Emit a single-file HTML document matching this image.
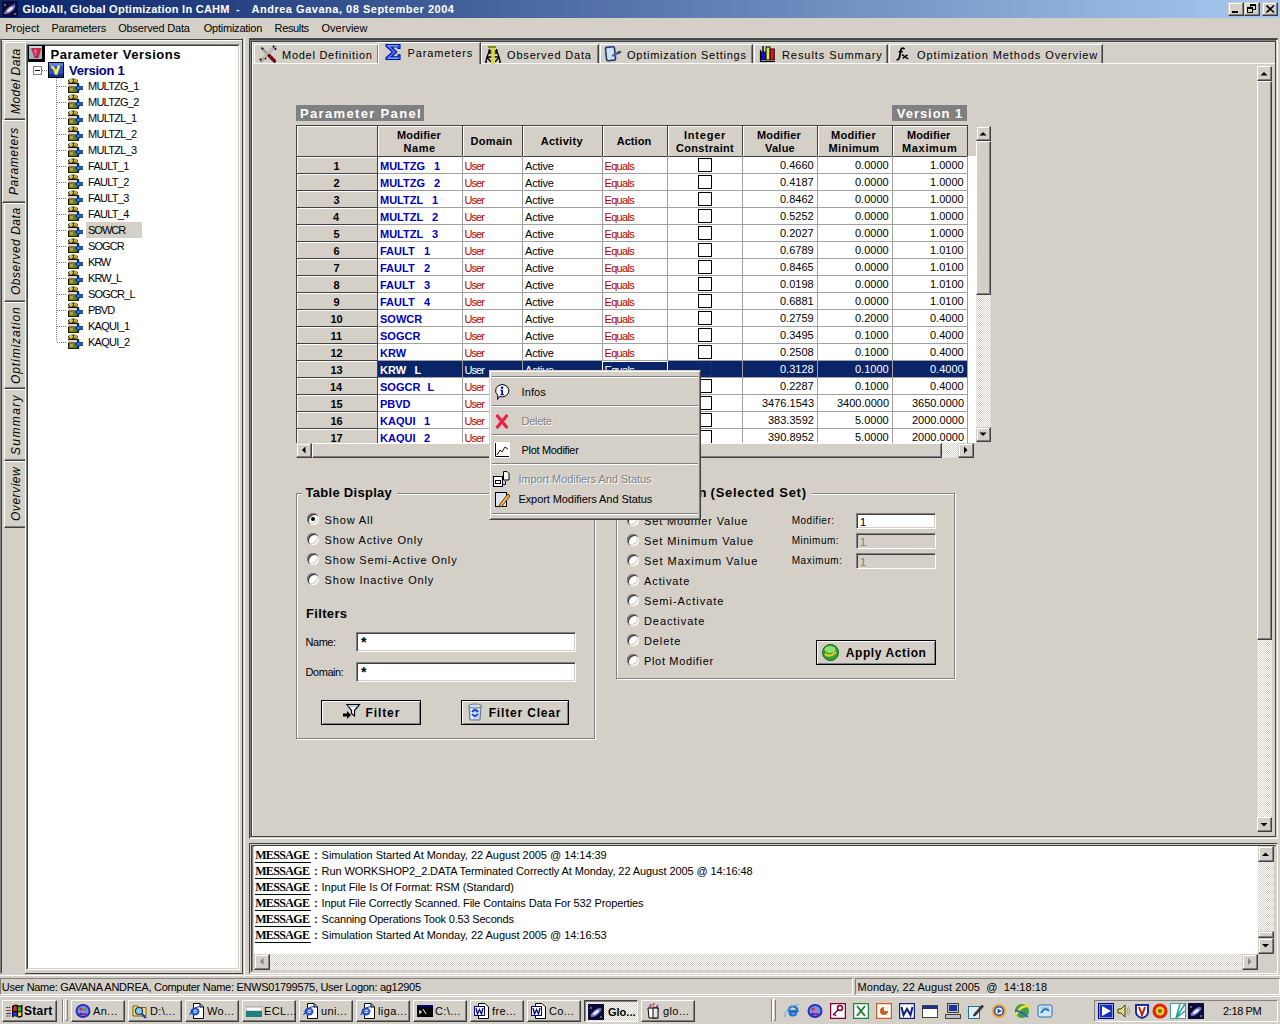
<!DOCTYPE html><html><head><meta charset="utf-8"><title>GlobAll</title><style>
*{margin:0;padding:0;box-sizing:border-box}
html,body{width:1280px;height:1024px;overflow:hidden;background:#d4d0c8;font-family:"Liberation Sans",sans-serif;font-size:11px;color:#000}
.ab{position:absolute}
.t{position:absolute;white-space:nowrap;line-height:1}
.r2{border-style:solid;border-width:1px;border-color:#d4d0c8 #404040 #404040 #d4d0c8;box-shadow:inset -1px -1px 0 #808080, inset 1px 1px 0 #fff;background:#d4d0c8}
.r1{border-style:solid;border-width:1px;border-color:#fff #404040 #404040 #fff;box-shadow:inset -1px -1px 0 #808080;background:#d4d0c8}
.sk{border-style:solid;border-width:1px;border-color:#808080 #fff #fff #808080;box-shadow:inset 1px 1px 0 #404040, inset -1px -1px 0 #d4d0c8}
.chk{background-color:#d4d0c8;background-image:linear-gradient(45deg,#fff 25%,transparent 25%,transparent 75%,#fff 75%),linear-gradient(45deg,#fff 25%,transparent 25%,transparent 75%,#fff 75%);background-size:2px 2px;background-position:0 0,1px 1px}
.rad{position:absolute;width:12px;height:12px;border-radius:50%;background:#fff;box-shadow:inset 1px 1px 0 #808080, inset 2px 2px 0 #404040, inset -1px -1px 0 #fff, inset -2px -2px 0 #d4d0c8}
.rad.on::after{content:"";position:absolute;left:4px;top:4px;width:4px;height:4px;background:#000;border-radius:50%}
</style></head><body>
<div class="ab" style="left:0px;top:0px;width:1280px;height:18px;background:linear-gradient(90deg,#0a246a 0%,#a6caf0 100%)"></div>
<svg class="ab" style="left:2px;top:1px;" width="16" height="16" viewBox="0 0 16 16"><rect width="16" height="16" fill="#0c0c38"/><ellipse cx="8" cy="8.5" rx="6.5" ry="2.6" transform="rotate(-38 8 8.5)" fill="#7a7ad0"/><ellipse cx="8" cy="8.5" rx="3.5" ry="1.4" transform="rotate(-38 8 8.5)" fill="#f0f0ff"/><circle cx="3" cy="4" r=".7" fill="#fff"/><circle cx="13" cy="13" r=".7" fill="#fff"/><circle cx="12.5" cy="3" r=".6" fill="#ccf"/><circle cx="2.5" cy="12" r=".5" fill="#ccf"/></svg>
<div class="t" style="left:22.50px;top:4px;font-size:11px;font-weight:bold;letter-spacing:0.257px;color:#fff;">GlobAll, Global Optimization In CAHM</div>
<div class="t" style="left:236.00px;top:4px;font-size:11px;font-weight:bold;color:#fff;">-</div>
<div class="t" style="left:251.50px;top:4px;font-size:11px;font-weight:bold;letter-spacing:0.516px;color:#fff;">Andrea Gavana, 08 September 2004</div>
<div class="ab r2" style="left:1228px;top:2px;width:16px;height:14px;"><div class="ab" style="left:3px;top:8px;width:6px;height:2px;background:#000"></div></div>
<div class="ab r2" style="left:1244px;top:2px;width:16px;height:14px;"><div class="ab" style="left:5px;top:1px;width:6px;height:6px;border:1px solid #000;border-top-width:2px"></div><div class="ab" style="left:2px;top:4px;width:6px;height:6px;border:1px solid #000;border-top-width:2px;background:#d4d0c8"></div></div>
<div class="ab r2" style="left:1262px;top:2px;width:16px;height:14px;"><svg class="ab" style="left:3px;top:2px" width="9" height="8"><path d="M0.5 0.5L8 7.5M8 0.5L0.5 7.5" stroke="#000" stroke-width="1.6"/></svg></div>
<div class="t" style="left:5.30px;top:23px;font-size:11px;letter-spacing:-0.017px;">Project</div>
<div class="t" style="left:51.40px;top:23px;font-size:11px;letter-spacing:-0.233px;">Parameters</div>
<div class="t" style="left:118.20px;top:23px;font-size:11px;letter-spacing:-0.183px;">Observed Data</div>
<div class="t" style="left:203.70px;top:23px;font-size:11px;letter-spacing:-0.227px;">Optimization</div>
<div class="t" style="left:274.60px;top:23px;font-size:11px;letter-spacing:-0.367px;">Results</div>
<div class="t" style="left:321.50px;top:23px;font-size:11px;letter-spacing:0.014px;">Overview</div>
<div class="ab" style="left:0px;top:38px;width:243px;height:936px;border-style:solid;border-width:1px 1px 0 1px;border-color:#d4d0c8 #404040 #404040 #808080"></div>
<div class="ab" style="left:2px;top:40px;width:240px;height:1px;background:#fff"></div>
<div class="ab" style="left:25px;top:973px;width:218px;height:1px;background:#404040"></div>
<div class="ab" style="left:0px;top:975px;width:1280px;height:1px;background:#fff"></div>
<div class="ab" style="left:1px;top:39px;width:241px;height:934px;border-style:solid;border-width:1px 0 0 1px;border-color:#404040"></div>
<div class="ab" style="left:25px;top:40px;width:2px;height:932px;border-left:1px solid #fff"></div>
<div class="ab" style="left:4px;top:42px;width:21px;height:78px;border-style:solid;border-width:1px 0 1px 1px;border-color:#fff #404040 #404040 #fff;box-shadow:inset 0 -1px 0 #808080;background:#d4d0c8"></div>
<div class="ab" style="left:2px;top:120px;width:23px;height:83px;border-style:solid;border-width:1px 0 1px 1px;border-color:#fff #404040 #404040 #fff;box-shadow:inset 0 -1px 0 #808080;background:#d4d0c8"></div>
<div class="ab" style="left:4px;top:203px;width:21px;height:99px;border-style:solid;border-width:1px 0 1px 1px;border-color:#fff #404040 #404040 #fff;box-shadow:inset 0 -1px 0 #808080;background:#d4d0c8"></div>
<div class="ab" style="left:4px;top:302px;width:21px;height:87px;border-style:solid;border-width:1px 0 1px 1px;border-color:#fff #404040 #404040 #fff;box-shadow:inset 0 -1px 0 #808080;background:#d4d0c8"></div>
<div class="ab" style="left:4px;top:389px;width:21px;height:72px;border-style:solid;border-width:1px 0 1px 1px;border-color:#fff #404040 #404040 #fff;box-shadow:inset 0 -1px 0 #808080;background:#d4d0c8"></div>
<div class="ab" style="left:4px;top:461px;width:21px;height:67px;border-style:solid;border-width:1px 0 1px 1px;border-color:#fff #404040 #404040 #fff;box-shadow:inset 0 -1px 0 #808080;background:#d4d0c8"></div>
<div class="t" style="left:10px;top:114.4px;transform-origin:0 0;transform:rotate(-90deg);font-size:12px;font-style:italic;letter-spacing:0.433px">Model Data</div>
<div class="t" style="left:8px;top:194.9px;transform-origin:0 0;transform:rotate(-90deg);font-size:12px;font-style:italic;letter-spacing:0.589px">Parameters</div>
<div class="t" style="left:10px;top:295px;transform-origin:0 0;transform:rotate(-90deg);font-size:12px;font-style:italic;letter-spacing:0.533px">Observed Data</div>
<div class="t" style="left:10px;top:384px;transform-origin:0 0;transform:rotate(-90deg);font-size:12px;font-style:italic;letter-spacing:0.909px">Optimization</div>
<div class="t" style="left:10px;top:455px;transform-origin:0 0;transform:rotate(-90deg);font-size:12px;font-style:italic;letter-spacing:1.367px">Summary</div>
<div class="t" style="left:10px;top:521.4px;transform-origin:0 0;transform:rotate(-90deg);font-size:12px;font-style:italic;letter-spacing:0.529px">Overview</div>
<div class="ab" style="left:26px;top:44px;width:214px;height:926px;border-style:solid;border-width:1px;border-color:#808080 #fff #fff #808080"></div>
<div class="ab" style="left:27px;top:45px;width:212px;height:924px;background:#fff;border-style:solid;border-width:1px;border-color:#404040 #d4d0c8 #d4d0c8 #404040"></div>
<svg class="ab" style="left:28px;top:45px;" width="17" height="17" viewBox="0 0 17 17"><rect x="0" y="0" width="17" height="17" fill="#000"/><rect x="1" y="1" width="13" height="13" fill="#9ab4c8"/><rect x="1" y="1" width="13" height="2" fill="#c8d4e0"/><path d="M3 3H13.5L10.5 13H6.5Z" fill="#c02848"/><path d="M5.5 4.5H9L8 11.5H7.5Z" fill="#f06088"/></svg>
<div class="t" style="left:50.60px;top:48px;font-size:13px;font-weight:bold;letter-spacing:0.494px;">Parameter Versions</div>
<svg class="ab" style="left:33px;top:66px;" width="9" height="9" viewBox="0 0 9 9"><rect x="0.5" y="0.5" width="8" height="8" fill="#fff" stroke="#808080"/><path d="M2 4.5H7" stroke="#000"/></svg>
<svg class="ab" style="left:42px;top:70px;" width="6" height="1" viewBox="0 0 6 1"><path d="M0 .5H6" stroke="#808080" stroke-dasharray="1 1"/></svg>
<svg class="ab" style="left:48px;top:62px;" width="16" height="16" viewBox="0 0 16 16"><rect width="16" height="16" fill="#000"/><rect x="1" y="1" width="14" height="14" fill="#2850c8"/><rect x="1" y="1" width="14" height="3" fill="#6080e0"/><rect x="1" y="12" width="14" height="3" fill="#183090"/><path d="M3 5Q6.5 4.5 8 12.5" stroke="#f0e840" stroke-width="2.6" fill="none"/><path d="M11 3.5L8 12.5" stroke="#f0f060" stroke-width="2.6" fill="none"/></svg>
<div class="t" style="left:69.00px;top:64px;font-size:13px;font-weight:bold;letter-spacing:-0.250px;color:#000080;">Version 1</div>
<svg class="ab" style="left:56px;top:78px;" width="1" height="264" viewBox="0 0 1 264"><path d="M.5 0V264" stroke="#808080" stroke-dasharray="1 1"/></svg>
<svg class="ab" style="left:57px;top:86px;" width="10" height="1" viewBox="0 0 10 1"><path d="M0 .5H10" stroke="#808080" stroke-dasharray="1 1"/></svg>
<svg class="ab" style="left:67px;top:78px;" width="16" height="16" viewBox="0 0 16 16"><ellipse cx="6" cy="3" rx="5" ry="2.5" fill="#202000"/><circle cx="4" cy="2.8" r="2" fill="#d8c850"/><circle cx="8.5" cy="2.8" r="2" fill="#b8a840"/><rect x="1" y="5" width="11" height="10" fill="#202000"/><rect x="1" y="6" width="9" height="2.5" fill="#e0d0c8"/><rect x="2" y="9" width="8" height="5" fill="#707a20"/><rect x="3" y="10" width="3" height="3" fill="#a0a840"/><path d="M8 10L12 6.5V8.5H15.5V11.5H12V13.5Z" fill="#2070d0" stroke="#002060" stroke-width="0.8"/></svg>
<div class="t" style="left:88.00px;top:81px;font-size:11px;letter-spacing:-0.757px;">MULTZG_1</div>
<svg class="ab" style="left:57px;top:102px;" width="10" height="1" viewBox="0 0 10 1"><path d="M0 .5H10" stroke="#808080" stroke-dasharray="1 1"/></svg>
<svg class="ab" style="left:67px;top:94px;" width="16" height="16" viewBox="0 0 16 16"><ellipse cx="6" cy="3" rx="5" ry="2.5" fill="#202000"/><circle cx="4" cy="2.8" r="2" fill="#d8c850"/><circle cx="8.5" cy="2.8" r="2" fill="#b8a840"/><rect x="1" y="5" width="11" height="10" fill="#202000"/><rect x="1" y="6" width="9" height="2.5" fill="#e0d0c8"/><rect x="2" y="9" width="8" height="5" fill="#707a20"/><rect x="3" y="10" width="3" height="3" fill="#a0a840"/><path d="M8 10L12 6.5V8.5H15.5V11.5H12V13.5Z" fill="#2070d0" stroke="#002060" stroke-width="0.8"/></svg>
<div class="t" style="left:88.00px;top:97px;font-size:11px;letter-spacing:-0.757px;">MULTZG_2</div>
<svg class="ab" style="left:57px;top:118px;" width="10" height="1" viewBox="0 0 10 1"><path d="M0 .5H10" stroke="#808080" stroke-dasharray="1 1"/></svg>
<svg class="ab" style="left:67px;top:110px;" width="16" height="16" viewBox="0 0 16 16"><ellipse cx="6" cy="3" rx="5" ry="2.5" fill="#202000"/><circle cx="4" cy="2.8" r="2" fill="#d8c850"/><circle cx="8.5" cy="2.8" r="2" fill="#b8a840"/><rect x="1" y="5" width="11" height="10" fill="#202000"/><rect x="1" y="6" width="9" height="2.5" fill="#e0d0c8"/><rect x="2" y="9" width="8" height="5" fill="#707a20"/><rect x="3" y="10" width="3" height="3" fill="#a0a840"/><path d="M8 10L12 6.5V8.5H15.5V11.5H12V13.5Z" fill="#2070d0" stroke="#002060" stroke-width="0.8"/></svg>
<div class="t" style="left:88.00px;top:113px;font-size:11px;letter-spacing:-0.717px;">MULTZL_1</div>
<svg class="ab" style="left:57px;top:134px;" width="10" height="1" viewBox="0 0 10 1"><path d="M0 .5H10" stroke="#808080" stroke-dasharray="1 1"/></svg>
<svg class="ab" style="left:67px;top:126px;" width="16" height="16" viewBox="0 0 16 16"><ellipse cx="6" cy="3" rx="5" ry="2.5" fill="#202000"/><circle cx="4" cy="2.8" r="2" fill="#d8c850"/><circle cx="8.5" cy="2.8" r="2" fill="#b8a840"/><rect x="1" y="5" width="11" height="10" fill="#202000"/><rect x="1" y="6" width="9" height="2.5" fill="#e0d0c8"/><rect x="2" y="9" width="8" height="5" fill="#707a20"/><rect x="3" y="10" width="3" height="3" fill="#a0a840"/><path d="M8 10L12 6.5V8.5H15.5V11.5H12V13.5Z" fill="#2070d0" stroke="#002060" stroke-width="0.8"/></svg>
<div class="t" style="left:88.00px;top:129px;font-size:11px;letter-spacing:-0.717px;">MULTZL_2</div>
<svg class="ab" style="left:57px;top:150px;" width="10" height="1" viewBox="0 0 10 1"><path d="M0 .5H10" stroke="#808080" stroke-dasharray="1 1"/></svg>
<svg class="ab" style="left:67px;top:142px;" width="16" height="16" viewBox="0 0 16 16"><ellipse cx="6" cy="3" rx="5" ry="2.5" fill="#202000"/><circle cx="4" cy="2.8" r="2" fill="#d8c850"/><circle cx="8.5" cy="2.8" r="2" fill="#b8a840"/><rect x="1" y="5" width="11" height="10" fill="#202000"/><rect x="1" y="6" width="9" height="2.5" fill="#e0d0c8"/><rect x="2" y="9" width="8" height="5" fill="#707a20"/><rect x="3" y="10" width="3" height="3" fill="#a0a840"/><path d="M8 10L12 6.5V8.5H15.5V11.5H12V13.5Z" fill="#2070d0" stroke="#002060" stroke-width="0.8"/></svg>
<div class="t" style="left:88.00px;top:145px;font-size:11px;letter-spacing:-0.717px;">MULTZL_3</div>
<svg class="ab" style="left:57px;top:166px;" width="10" height="1" viewBox="0 0 10 1"><path d="M0 .5H10" stroke="#808080" stroke-dasharray="1 1"/></svg>
<svg class="ab" style="left:67px;top:158px;" width="16" height="16" viewBox="0 0 16 16"><ellipse cx="6" cy="3" rx="5" ry="2.5" fill="#202000"/><circle cx="4" cy="2.8" r="2" fill="#d8c850"/><circle cx="8.5" cy="2.8" r="2" fill="#b8a840"/><rect x="1" y="5" width="11" height="10" fill="#202000"/><rect x="1" y="6" width="9" height="2.5" fill="#e0d0c8"/><rect x="2" y="9" width="8" height="5" fill="#707a20"/><rect x="3" y="10" width="3" height="3" fill="#a0a840"/><path d="M8 10L12 6.5V8.5H15.5V11.5H12V13.5Z" fill="#2070d0" stroke="#002060" stroke-width="0.8"/></svg>
<div class="t" style="left:88.00px;top:161px;font-size:11px;letter-spacing:-0.713px;">FAULT_1</div>
<svg class="ab" style="left:57px;top:182px;" width="10" height="1" viewBox="0 0 10 1"><path d="M0 .5H10" stroke="#808080" stroke-dasharray="1 1"/></svg>
<svg class="ab" style="left:67px;top:174px;" width="16" height="16" viewBox="0 0 16 16"><ellipse cx="6" cy="3" rx="5" ry="2.5" fill="#202000"/><circle cx="4" cy="2.8" r="2" fill="#d8c850"/><circle cx="8.5" cy="2.8" r="2" fill="#b8a840"/><rect x="1" y="5" width="11" height="10" fill="#202000"/><rect x="1" y="6" width="9" height="2.5" fill="#e0d0c8"/><rect x="2" y="9" width="8" height="5" fill="#707a20"/><rect x="3" y="10" width="3" height="3" fill="#a0a840"/><path d="M8 10L12 6.5V8.5H15.5V11.5H12V13.5Z" fill="#2070d0" stroke="#002060" stroke-width="0.8"/></svg>
<div class="t" style="left:88.00px;top:177px;font-size:11px;letter-spacing:-0.713px;">FAULT_2</div>
<svg class="ab" style="left:57px;top:198px;" width="10" height="1" viewBox="0 0 10 1"><path d="M0 .5H10" stroke="#808080" stroke-dasharray="1 1"/></svg>
<svg class="ab" style="left:67px;top:190px;" width="16" height="16" viewBox="0 0 16 16"><ellipse cx="6" cy="3" rx="5" ry="2.5" fill="#202000"/><circle cx="4" cy="2.8" r="2" fill="#d8c850"/><circle cx="8.5" cy="2.8" r="2" fill="#b8a840"/><rect x="1" y="5" width="11" height="10" fill="#202000"/><rect x="1" y="6" width="9" height="2.5" fill="#e0d0c8"/><rect x="2" y="9" width="8" height="5" fill="#707a20"/><rect x="3" y="10" width="3" height="3" fill="#a0a840"/><path d="M8 10L12 6.5V8.5H15.5V11.5H12V13.5Z" fill="#2070d0" stroke="#002060" stroke-width="0.8"/></svg>
<div class="t" style="left:88.00px;top:193px;font-size:11px;letter-spacing:-0.713px;">FAULT_3</div>
<svg class="ab" style="left:57px;top:214px;" width="10" height="1" viewBox="0 0 10 1"><path d="M0 .5H10" stroke="#808080" stroke-dasharray="1 1"/></svg>
<svg class="ab" style="left:67px;top:206px;" width="16" height="16" viewBox="0 0 16 16"><ellipse cx="6" cy="3" rx="5" ry="2.5" fill="#202000"/><circle cx="4" cy="2.8" r="2" fill="#d8c850"/><circle cx="8.5" cy="2.8" r="2" fill="#b8a840"/><rect x="1" y="5" width="11" height="10" fill="#202000"/><rect x="1" y="6" width="9" height="2.5" fill="#e0d0c8"/><rect x="2" y="9" width="8" height="5" fill="#707a20"/><rect x="3" y="10" width="3" height="3" fill="#a0a840"/><path d="M8 10L12 6.5V8.5H15.5V11.5H12V13.5Z" fill="#2070d0" stroke="#002060" stroke-width="0.8"/></svg>
<div class="t" style="left:88.00px;top:209px;font-size:11px;letter-spacing:-0.713px;">FAULT_4</div>
<svg class="ab" style="left:57px;top:230px;" width="10" height="1" viewBox="0 0 10 1"><path d="M0 .5H10" stroke="#808080" stroke-dasharray="1 1"/></svg>
<svg class="ab" style="left:67px;top:222px;" width="16" height="16" viewBox="0 0 16 16"><ellipse cx="6" cy="3" rx="5" ry="2.5" fill="#202000"/><circle cx="4" cy="2.8" r="2" fill="#d8c850"/><circle cx="8.5" cy="2.8" r="2" fill="#b8a840"/><rect x="1" y="5" width="11" height="10" fill="#202000"/><rect x="1" y="6" width="9" height="2.5" fill="#e0d0c8"/><rect x="2" y="9" width="8" height="5" fill="#707a20"/><rect x="3" y="10" width="3" height="3" fill="#a0a840"/><path d="M8 10L12 6.5V8.5H15.5V11.5H12V13.5Z" fill="#2070d0" stroke="#002060" stroke-width="0.8"/></svg>
<div class="ab" style="left:86px;top:222px;width:56px;height:16px;background:#d4d0c8"></div>
<div class="t" style="left:88.00px;top:225px;font-size:11px;letter-spacing:-0.976px;">SOWCR</div>
<svg class="ab" style="left:57px;top:246px;" width="10" height="1" viewBox="0 0 10 1"><path d="M0 .5H10" stroke="#808080" stroke-dasharray="1 1"/></svg>
<svg class="ab" style="left:67px;top:238px;" width="16" height="16" viewBox="0 0 16 16"><ellipse cx="6" cy="3" rx="5" ry="2.5" fill="#202000"/><circle cx="4" cy="2.8" r="2" fill="#d8c850"/><circle cx="8.5" cy="2.8" r="2" fill="#b8a840"/><rect x="1" y="5" width="11" height="10" fill="#202000"/><rect x="1" y="6" width="9" height="2.5" fill="#e0d0c8"/><rect x="2" y="9" width="8" height="5" fill="#707a20"/><rect x="3" y="10" width="3" height="3" fill="#a0a840"/><path d="M8 10L12 6.5V8.5H15.5V11.5H12V13.5Z" fill="#2070d0" stroke="#002060" stroke-width="0.8"/></svg>
<div class="t" style="left:88.00px;top:241px;font-size:11px;letter-spacing:-0.930px;">SOGCR</div>
<svg class="ab" style="left:57px;top:262px;" width="10" height="1" viewBox="0 0 10 1"><path d="M0 .5H10" stroke="#808080" stroke-dasharray="1 1"/></svg>
<svg class="ab" style="left:67px;top:254px;" width="16" height="16" viewBox="0 0 16 16"><ellipse cx="6" cy="3" rx="5" ry="2.5" fill="#202000"/><circle cx="4" cy="2.8" r="2" fill="#d8c850"/><circle cx="8.5" cy="2.8" r="2" fill="#b8a840"/><rect x="1" y="5" width="11" height="10" fill="#202000"/><rect x="1" y="6" width="9" height="2.5" fill="#e0d0c8"/><rect x="2" y="9" width="8" height="5" fill="#707a20"/><rect x="3" y="10" width="3" height="3" fill="#a0a840"/><path d="M8 10L12 6.5V8.5H15.5V11.5H12V13.5Z" fill="#2070d0" stroke="#002060" stroke-width="0.8"/></svg>
<div class="t" style="left:88.00px;top:257px;font-size:11px;letter-spacing:-1.209px;">KRW</div>
<svg class="ab" style="left:57px;top:278px;" width="10" height="1" viewBox="0 0 10 1"><path d="M0 .5H10" stroke="#808080" stroke-dasharray="1 1"/></svg>
<svg class="ab" style="left:67px;top:270px;" width="16" height="16" viewBox="0 0 16 16"><ellipse cx="6" cy="3" rx="5" ry="2.5" fill="#202000"/><circle cx="4" cy="2.8" r="2" fill="#d8c850"/><circle cx="8.5" cy="2.8" r="2" fill="#b8a840"/><rect x="1" y="5" width="11" height="10" fill="#202000"/><rect x="1" y="6" width="9" height="2.5" fill="#e0d0c8"/><rect x="2" y="9" width="8" height="5" fill="#707a20"/><rect x="3" y="10" width="3" height="3" fill="#a0a840"/><path d="M8 10L12 6.5V8.5H15.5V11.5H12V13.5Z" fill="#2070d0" stroke="#002060" stroke-width="0.8"/></svg>
<div class="t" style="left:88.00px;top:273px;font-size:11px;letter-spacing:-0.883px;">KRW_L</div>
<svg class="ab" style="left:57px;top:294px;" width="10" height="1" viewBox="0 0 10 1"><path d="M0 .5H10" stroke="#808080" stroke-dasharray="1 1"/></svg>
<svg class="ab" style="left:67px;top:286px;" width="16" height="16" viewBox="0 0 16 16"><ellipse cx="6" cy="3" rx="5" ry="2.5" fill="#202000"/><circle cx="4" cy="2.8" r="2" fill="#d8c850"/><circle cx="8.5" cy="2.8" r="2" fill="#b8a840"/><rect x="1" y="5" width="11" height="10" fill="#202000"/><rect x="1" y="6" width="9" height="2.5" fill="#e0d0c8"/><rect x="2" y="9" width="8" height="5" fill="#707a20"/><rect x="3" y="10" width="3" height="3" fill="#a0a840"/><path d="M8 10L12 6.5V8.5H15.5V11.5H12V13.5Z" fill="#2070d0" stroke="#002060" stroke-width="0.8"/></svg>
<div class="t" style="left:88.00px;top:289px;font-size:11px;letter-spacing:-0.822px;">SOGCR_L</div>
<svg class="ab" style="left:57px;top:310px;" width="10" height="1" viewBox="0 0 10 1"><path d="M0 .5H10" stroke="#808080" stroke-dasharray="1 1"/></svg>
<svg class="ab" style="left:67px;top:302px;" width="16" height="16" viewBox="0 0 16 16"><ellipse cx="6" cy="3" rx="5" ry="2.5" fill="#202000"/><circle cx="4" cy="2.8" r="2" fill="#d8c850"/><circle cx="8.5" cy="2.8" r="2" fill="#b8a840"/><rect x="1" y="5" width="11" height="10" fill="#202000"/><rect x="1" y="6" width="9" height="2.5" fill="#e0d0c8"/><rect x="2" y="9" width="8" height="5" fill="#707a20"/><rect x="3" y="10" width="3" height="3" fill="#a0a840"/><path d="M8 10L12 6.5V8.5H15.5V11.5H12V13.5Z" fill="#2070d0" stroke="#002060" stroke-width="0.8"/></svg>
<div class="t" style="left:88.00px;top:305px;font-size:11px;letter-spacing:-0.930px;">PBVD</div>
<svg class="ab" style="left:57px;top:326px;" width="10" height="1" viewBox="0 0 10 1"><path d="M0 .5H10" stroke="#808080" stroke-dasharray="1 1"/></svg>
<svg class="ab" style="left:67px;top:318px;" width="16" height="16" viewBox="0 0 16 16"><ellipse cx="6" cy="3" rx="5" ry="2.5" fill="#202000"/><circle cx="4" cy="2.8" r="2" fill="#d8c850"/><circle cx="8.5" cy="2.8" r="2" fill="#b8a840"/><rect x="1" y="5" width="11" height="10" fill="#202000"/><rect x="1" y="6" width="9" height="2.5" fill="#e0d0c8"/><rect x="2" y="9" width="8" height="5" fill="#707a20"/><rect x="3" y="10" width="3" height="3" fill="#a0a840"/><path d="M8 10L12 6.5V8.5H15.5V11.5H12V13.5Z" fill="#2070d0" stroke="#002060" stroke-width="0.8"/></svg>
<div class="t" style="left:88.00px;top:321px;font-size:11px;letter-spacing:-0.728px;">KAQUI_1</div>
<svg class="ab" style="left:57px;top:342px;" width="10" height="1" viewBox="0 0 10 1"><path d="M0 .5H10" stroke="#808080" stroke-dasharray="1 1"/></svg>
<svg class="ab" style="left:67px;top:334px;" width="16" height="16" viewBox="0 0 16 16"><ellipse cx="6" cy="3" rx="5" ry="2.5" fill="#202000"/><circle cx="4" cy="2.8" r="2" fill="#d8c850"/><circle cx="8.5" cy="2.8" r="2" fill="#b8a840"/><rect x="1" y="5" width="11" height="10" fill="#202000"/><rect x="1" y="6" width="9" height="2.5" fill="#e0d0c8"/><rect x="2" y="9" width="8" height="5" fill="#707a20"/><rect x="3" y="10" width="3" height="3" fill="#a0a840"/><path d="M8 10L12 6.5V8.5H15.5V11.5H12V13.5Z" fill="#2070d0" stroke="#002060" stroke-width="0.8"/></svg>
<div class="t" style="left:88.00px;top:337px;font-size:11px;letter-spacing:-0.728px;">KAQUI_2</div>
<div class="ab" style="left:243px;top:38px;width:6px;height:940px;border-left:1px solid #d4d0c8;box-shadow:inset 1px 0 0 #fff"></div>
<div class="ab" style="left:249px;top:39px;width:1029px;height:800px;border-style:solid;border-width:1px;border-color:#404040 #fff #fff #404040"></div>
<div class="ab" style="left:251px;top:41px;width:1025px;height:796px;border-style:solid;border-width:1px;border-color:#404040 #404040 #404040 #404040;box-shadow:inset 1px 0 0 #fff, inset 0 1px 0 #e4e2de"></div>
<div class="ab" style="left:249px;top:38px;width:1029px;height:1px;background:#505050"></div>
<div class="ab" style="left:250px;top:40px;width:1026px;height:1px;background:#808080"></div>
<div class="ab" style="left:250px;top:40px;width:1px;height:797px;background:#808080"></div>
<div class="ab" style="left:252px;top:63px;width:1023px;height:1px;background:#fff;z-index:1"></div>
<div class="ab" style="left:254px;top:44px;width:125px;height:20px;border-style:solid;border-width:1px 1px 0 1px;border-color:#fff #404040 #fff #fff;box-shadow:inset -1px 0 0 #808080"></div>
<div class="ab" style="left:378px;top:42px;width:103px;height:22px;background:#d4d0c8;border-style:solid;border-width:1px 1px 0 1px;border-color:#fff #404040 #fff #fff;box-shadow:inset -1px 0 0 #808080;z-index:2"></div>
<div class="ab" style="left:481px;top:44px;width:118px;height:20px;border-style:solid;border-width:1px 1px 0 1px;border-color:#fff #404040 #fff #fff;box-shadow:inset -1px 0 0 #808080"></div>
<div class="ab" style="left:600px;top:44px;width:153px;height:20px;border-style:solid;border-width:1px 1px 0 1px;border-color:#fff #404040 #fff #fff;box-shadow:inset -1px 0 0 #808080"></div>
<div class="ab" style="left:754px;top:44px;width:134px;height:20px;border-style:solid;border-width:1px 1px 0 1px;border-color:#fff #404040 #fff #fff;box-shadow:inset -1px 0 0 #808080"></div>
<div class="ab" style="left:889px;top:44px;width:214px;height:20px;border-style:solid;border-width:1px 1px 0 1px;border-color:#fff #404040 #fff #fff;box-shadow:inset -1px 0 0 #808080"></div>
<div class="t" style="left:282.00px;top:50px;font-size:11px;letter-spacing:0.733px;z-index:3;">Model Definition</div>
<div class="t" style="left:407.50px;top:48px;font-size:11px;letter-spacing:0.889px;z-index:3;">Parameters</div>
<div class="t" style="left:507.00px;top:50px;font-size:11px;letter-spacing:0.833px;z-index:3;">Observed Data</div>
<div class="t" style="left:627.00px;top:50px;font-size:11px;letter-spacing:0.750px;z-index:3;">Optimization Settings</div>
<div class="t" style="left:782.00px;top:50px;font-size:11px;letter-spacing:0.929px;z-index:3;">Results Summary</div>
<div class="t" style="left:917.00px;top:50px;font-size:11px;letter-spacing:0.893px;z-index:3;">Optimization Methods Overview</div>
<svg class="ab" style="left:256px;top:43px;z-index:3;" width="24" height="21" viewBox="0 0 24 21"><path d="M5 4.5L11.5 11" stroke="#9a9a9a" stroke-width="2.4"/><circle cx="6.5" cy="5.5" r="1" fill="#000"/><path d="M18.5 4L6 17" stroke="#a8a8a8" stroke-width="2.6"/><path d="M17.5 5L8 15" stroke="#f0f0f0" stroke-width="0.8"/><circle cx="18.5" cy="4.5" r="2" fill="#a0a0a0"/><circle cx="5.5" cy="17.5" r="2" fill="#a0a0a0"/><circle cx="17.5" cy="3.5" r=".9" fill="#000"/><circle cx="19.5" cy="6" r=".9" fill="#000"/><circle cx="4.5" cy="16.5" r=".9" fill="#000"/><circle cx="9.5" cy="15.5" r=".9" fill="#000"/><path d="M13 12.5L18.5 18" stroke="#6a0008" stroke-width="3.4" stroke-linecap="round"/><path d="M13.5 13L18 17.5" stroke="#b03040" stroke-width="0.9"/></svg>
<svg class="ab" style="left:384px;top:44px;z-index:3;" width="17" height="17" viewBox="0 0 17 17"><path d="M2 0.5H16V4.5H14V3H7.5L12.8 8L7.5 12.8H14V10.8H16V15.5H2V13.8L8.5 8L2 2.2Z" fill="#4878f8" stroke="#0010a0" stroke-width="1.1" stroke-linejoin="miter"/><path d="M4 1.8H14M4.5 14.2H14.5" stroke="#90c0ff" stroke-width=".9"/></svg>
<svg class="ab" style="left:484px;top:42px;z-index:3;" width="22" height="22" viewBox="0 0 22 22"><path d="M5.5 7L4.5 11L3 15L1.8 20M12.5 7L13.5 11L15 15L16.2 20M4.5 11H13.5M3.3 15H14.7M3 15.5L7 20M15 15.5L11 20M1 20.2H3M15 20.2H17M5 9H13" stroke="#000" stroke-width="1.3" fill="none"/><rect x="4" y="4" width="8" height="2" fill="#8a8a10"/><rect x="7.3" y="6" width="3.5" height="16" fill="#dcdc38"/></svg>
<svg class="ab" style="left:603px;top:42px;z-index:3;" width="22" height="22" viewBox="0 0 22 22"><rect x="3" y="5" width="9" height="13.5" rx="1.5" fill="#c8e4f8" stroke="#203878" stroke-width="1.6" transform="rotate(-6 7.5 11.5)"/><path d="M5.5 10L7.5 13.5" stroke="#e8e0a0" stroke-width="1.5"/><path d="M10 13.5L16 10.5" stroke="#6060a0" stroke-width="2.4" stroke-linecap="round"/><path d="M15 10.8L17 10" stroke="#404060" stroke-width="2.4" stroke-linecap="round"/></svg>
<svg class="ab" style="left:757px;top:42px;z-index:3;" width="22" height="22" viewBox="0 0 22 22"><path d="M3.5 8V19.5H18" stroke="#000" stroke-width="1.2" fill="none"/><path d="M4 18.5H17" stroke="#fff" stroke-width="1"/><path d="M6 4V10" stroke="#000" stroke-width="1.4"/><rect x="4.5" y="10" width="4" height="8" fill="#1010d0" stroke="#000" stroke-width=".8"/><rect x="9" y="5" width="4" height="13" fill="#d8e840" stroke="#000" stroke-width="1"/><rect x="13.3" y="7" width="4" height="11" fill="#d81818" stroke="#300" stroke-width="1"/></svg>
<svg class="ab" style="left:890px;top:42px;z-index:3;" width="24" height="22" viewBox="0 0 24 22"><path d="M14.5 7.3Q14 6 12.5 6.2Q11 6.5 10.7 8.5L9.8 14Q9.3 16.8 8 17.5L6.5 18" stroke="#000" stroke-width="1.8" fill="none"/><path d="M8.5 9.8H13" stroke="#000" stroke-width="1.3"/><path d="M12.5 13L17.5 16.5M17.5 12.8L12.8 16.3M11.8 13H13.5M16.8 16.5H18.3" stroke="#000" stroke-width="1.5"/></svg>
<div class="ab" style="left:1272px;top:64px;width:3px;height:772px;background:#d4d0c8"></div>
<div class="ab" style="left:1257px;top:66px;width:15px;height:15px;border-style:solid;border-width:1px;border-color:#fff #404040 #404040 #fff;box-shadow:inset -1px -1px 0 #808080"><svg class="ab" style="left:2px;top:4px" width="9" height="6"><path d="M0.5 4.5H7.5L4 1Z" fill="#000"/></svg></div>
<div class="ab r1" style="left:1257px;top:81px;width:15px;height:559px;"></div>
<div class="ab chk" style="left:1257px;top:640px;width:15px;height:177px;"></div>
<div class="ab" style="left:1257px;top:817px;width:15px;height:15px;border-style:solid;border-width:1px;border-color:#fff #404040 #404040 #fff;box-shadow:inset -1px -1px 0 #808080"><svg class="ab" style="left:2px;top:4px" width="9" height="6"><path d="M0.5 1H7.5L4 4.5Z" fill="#000"/></svg></div>
<div class="ab" style="left:296px;top:105px;width:128px;height:16px;background:#808080"></div>
<div class="t" style="left:300.00px;top:107px;font-size:13px;font-weight:bold;letter-spacing:1.336px;color:#fff;">Parameter Panel</div>
<div class="ab" style="left:892px;top:105px;width:75px;height:16px;background:#808080"></div>
<div class="t" style="left:896.80px;top:107px;font-size:13px;font-weight:bold;letter-spacing:0.963px;color:#fff;">Version 1</div>
<div class="ab" style="left:296px;top:156px;width:680px;height:287px;background:#fff"></div>
<div class="ab" style="left:296px;top:125px;width:672px;height:32px;background:#d4d0c8;border-style:solid;border-width:1px 0 0 1px;border-color:#404040"></div>
<div class="ab" style="left:296px;top:125px;width:82px;height:32px;border-style:solid;border-width:1px;border-color:#404040;box-shadow:inset 1px 1px 0 #fff"></div>
<div class="ab" style="left:377px;top:125px;width:86px;height:32px;border-style:solid;border-width:1px;border-color:#404040;box-shadow:inset 1px 1px 0 #fff"></div>
<div class="ab" style="left:462px;top:125px;width:61px;height:32px;border-style:solid;border-width:1px;border-color:#404040;box-shadow:inset 1px 1px 0 #fff"></div>
<div class="ab" style="left:522px;top:125px;width:81px;height:32px;border-style:solid;border-width:1px;border-color:#404040;box-shadow:inset 1px 1px 0 #fff"></div>
<div class="ab" style="left:602px;top:125px;width:66px;height:32px;border-style:solid;border-width:1px;border-color:#404040;box-shadow:inset 1px 1px 0 #fff"></div>
<div class="ab" style="left:667px;top:125px;width:76px;height:32px;border-style:solid;border-width:1px;border-color:#404040;box-shadow:inset 1px 1px 0 #fff"></div>
<div class="ab" style="left:742px;top:125px;width:76px;height:32px;border-style:solid;border-width:1px;border-color:#404040;box-shadow:inset 1px 1px 0 #fff"></div>
<div class="ab" style="left:817px;top:125px;width:76px;height:32px;border-style:solid;border-width:1px;border-color:#404040;box-shadow:inset 1px 1px 0 #fff"></div>
<div class="ab" style="left:892px;top:125px;width:76px;height:32px;border-style:solid;border-width:1px;border-color:#404040;box-shadow:inset 1px 1px 0 #fff"></div>
<div class="t" style="left:397.00px;top:130px;font-size:11px;font-weight:bold;letter-spacing:0.143px;">Modifier</div>
<div class="t" style="left:403.60px;top:143px;font-size:11px;font-weight:bold;letter-spacing:0.533px;">Name</div>
<div class="t" style="left:470.60px;top:136px;font-size:11px;font-weight:bold;letter-spacing:0.280px;">Domain</div>
<div class="t" style="left:540.70px;top:136px;font-size:11px;font-weight:bold;letter-spacing:0.300px;">Activity</div>
<div class="t" style="left:616.70px;top:136px;font-size:11px;font-weight:bold;letter-spacing:0.060px;">Action</div>
<div class="t" style="left:683.90px;top:130px;font-size:11px;font-weight:bold;letter-spacing:0.800px;">Integer</div>
<div class="t" style="left:676.00px;top:143px;font-size:11px;font-weight:bold;letter-spacing:0.300px;">Constraint</div>
<div class="t" style="left:757.00px;top:130px;font-size:11px;font-weight:bold;letter-spacing:0.143px;">Modifier</div>
<div class="t" style="left:765.00px;top:143px;font-size:11px;font-weight:bold;letter-spacing:0.250px;">Value</div>
<div class="t" style="left:831.00px;top:130px;font-size:11px;font-weight:bold;letter-spacing:0.286px;">Modifier</div>
<div class="t" style="left:828.60px;top:143px;font-size:11px;font-weight:bold;letter-spacing:0.367px;">Minimum</div>
<div class="t" style="left:907.00px;top:130px;font-size:11px;font-weight:bold;letter-spacing:0.086px;">Modifier</div>
<div class="t" style="left:902.00px;top:143px;font-size:11px;font-weight:bold;letter-spacing:0.667px;">Maximum</div>
<div class="ab" style="left:0;top:0;width:1280px;height:443px;overflow:hidden">
<div class="ab" style="left:296px;top:156px;width:82px;height:18px;background:#d4d0c8;border:1px solid #404040;box-shadow:inset 1px 1px 0 #fff"></div>
<div class="ab" style="left:462px;top:156px;width:1px;height:17px;background:#a0a0a0"></div>
<div class="ab" style="left:522px;top:156px;width:1px;height:17px;background:#a0a0a0"></div>
<div class="ab" style="left:602px;top:156px;width:1px;height:17px;background:#a0a0a0"></div>
<div class="ab" style="left:667px;top:156px;width:1px;height:17px;background:#a0a0a0"></div>
<div class="ab" style="left:742px;top:156px;width:1px;height:17px;background:#a0a0a0"></div>
<div class="ab" style="left:817px;top:156px;width:1px;height:17px;background:#a0a0a0"></div>
<div class="ab" style="left:892px;top:156px;width:1px;height:17px;background:#a0a0a0"></div>
<div class="ab" style="left:967px;top:156px;width:1px;height:17px;background:#a0a0a0"></div>
<div class="ab" style="left:378px;top:173px;width:589px;height:1px;background:#a0a0a0"></div>
<div class="t" style="left:333.50px;top:161px;font-size:11px;font-weight:bold;">1</div>
<div class="t" style="left:380.00px;top:161px;font-size:11px;font-weight:bold;color:#0000b8;">MULTZG</div>
<div class="t" style="left:434.00px;top:161px;font-size:11px;font-weight:bold;color:#0000b8;">1</div>
<div class="t" style="left:464.40px;top:161px;font-size:11px;letter-spacing:-0.933px;color:#b00000;">User</div>
<div class="t" style="left:525.00px;top:161px;font-size:11px;letter-spacing:-0.200px;color:#000;">Active</div>
<div class="t" style="left:604.50px;top:161px;font-size:11px;letter-spacing:-0.700px;color:#b00000;">Equals</div>
<div class="ab" style="left:698px;top:158px;width:14px;height:14px;border:1px solid #000;background:#fff"></div>
<div class="t" style="left:780.00px;top:160px;font-size:11px;color:#000;">0.4660</div>
<div class="t" style="left:855.00px;top:160px;font-size:11px;color:#000;">0.0000</div>
<div class="t" style="left:930.00px;top:160px;font-size:11px;color:#000;">1.0000</div>
<div class="ab" style="left:296px;top:173px;width:82px;height:18px;background:#d4d0c8;border:1px solid #404040;box-shadow:inset 1px 1px 0 #fff"></div>
<div class="ab" style="left:462px;top:173px;width:1px;height:17px;background:#a0a0a0"></div>
<div class="ab" style="left:522px;top:173px;width:1px;height:17px;background:#a0a0a0"></div>
<div class="ab" style="left:602px;top:173px;width:1px;height:17px;background:#a0a0a0"></div>
<div class="ab" style="left:667px;top:173px;width:1px;height:17px;background:#a0a0a0"></div>
<div class="ab" style="left:742px;top:173px;width:1px;height:17px;background:#a0a0a0"></div>
<div class="ab" style="left:817px;top:173px;width:1px;height:17px;background:#a0a0a0"></div>
<div class="ab" style="left:892px;top:173px;width:1px;height:17px;background:#a0a0a0"></div>
<div class="ab" style="left:967px;top:173px;width:1px;height:17px;background:#a0a0a0"></div>
<div class="ab" style="left:378px;top:190px;width:589px;height:1px;background:#a0a0a0"></div>
<div class="t" style="left:333.50px;top:178px;font-size:11px;font-weight:bold;">2</div>
<div class="t" style="left:380.00px;top:178px;font-size:11px;font-weight:bold;color:#0000b8;">MULTZG</div>
<div class="t" style="left:434.00px;top:178px;font-size:11px;font-weight:bold;color:#0000b8;">2</div>
<div class="t" style="left:464.40px;top:178px;font-size:11px;letter-spacing:-0.933px;color:#b00000;">User</div>
<div class="t" style="left:525.00px;top:178px;font-size:11px;letter-spacing:-0.200px;color:#000;">Active</div>
<div class="t" style="left:604.50px;top:178px;font-size:11px;letter-spacing:-0.700px;color:#b00000;">Equals</div>
<div class="ab" style="left:698px;top:175px;width:14px;height:14px;border:1px solid #000;background:#fff"></div>
<div class="t" style="left:780.00px;top:177px;font-size:11px;color:#000;">0.4187</div>
<div class="t" style="left:855.00px;top:177px;font-size:11px;color:#000;">0.0000</div>
<div class="t" style="left:930.00px;top:177px;font-size:11px;color:#000;">1.0000</div>
<div class="ab" style="left:296px;top:190px;width:82px;height:18px;background:#d4d0c8;border:1px solid #404040;box-shadow:inset 1px 1px 0 #fff"></div>
<div class="ab" style="left:462px;top:190px;width:1px;height:17px;background:#a0a0a0"></div>
<div class="ab" style="left:522px;top:190px;width:1px;height:17px;background:#a0a0a0"></div>
<div class="ab" style="left:602px;top:190px;width:1px;height:17px;background:#a0a0a0"></div>
<div class="ab" style="left:667px;top:190px;width:1px;height:17px;background:#a0a0a0"></div>
<div class="ab" style="left:742px;top:190px;width:1px;height:17px;background:#a0a0a0"></div>
<div class="ab" style="left:817px;top:190px;width:1px;height:17px;background:#a0a0a0"></div>
<div class="ab" style="left:892px;top:190px;width:1px;height:17px;background:#a0a0a0"></div>
<div class="ab" style="left:967px;top:190px;width:1px;height:17px;background:#a0a0a0"></div>
<div class="ab" style="left:378px;top:207px;width:589px;height:1px;background:#a0a0a0"></div>
<div class="t" style="left:333.50px;top:195px;font-size:11px;font-weight:bold;">3</div>
<div class="t" style="left:380.00px;top:195px;font-size:11px;font-weight:bold;color:#0000b8;">MULTZL</div>
<div class="t" style="left:432.00px;top:195px;font-size:11px;font-weight:bold;color:#0000b8;">1</div>
<div class="t" style="left:464.40px;top:195px;font-size:11px;letter-spacing:-0.933px;color:#b00000;">User</div>
<div class="t" style="left:525.00px;top:195px;font-size:11px;letter-spacing:-0.200px;color:#000;">Active</div>
<div class="t" style="left:604.50px;top:195px;font-size:11px;letter-spacing:-0.700px;color:#b00000;">Equals</div>
<div class="ab" style="left:698px;top:192px;width:14px;height:14px;border:1px solid #000;background:#fff"></div>
<div class="t" style="left:780.00px;top:194px;font-size:11px;color:#000;">0.8462</div>
<div class="t" style="left:855.00px;top:194px;font-size:11px;color:#000;">0.0000</div>
<div class="t" style="left:930.00px;top:194px;font-size:11px;color:#000;">1.0000</div>
<div class="ab" style="left:296px;top:207px;width:82px;height:18px;background:#d4d0c8;border:1px solid #404040;box-shadow:inset 1px 1px 0 #fff"></div>
<div class="ab" style="left:462px;top:207px;width:1px;height:17px;background:#a0a0a0"></div>
<div class="ab" style="left:522px;top:207px;width:1px;height:17px;background:#a0a0a0"></div>
<div class="ab" style="left:602px;top:207px;width:1px;height:17px;background:#a0a0a0"></div>
<div class="ab" style="left:667px;top:207px;width:1px;height:17px;background:#a0a0a0"></div>
<div class="ab" style="left:742px;top:207px;width:1px;height:17px;background:#a0a0a0"></div>
<div class="ab" style="left:817px;top:207px;width:1px;height:17px;background:#a0a0a0"></div>
<div class="ab" style="left:892px;top:207px;width:1px;height:17px;background:#a0a0a0"></div>
<div class="ab" style="left:967px;top:207px;width:1px;height:17px;background:#a0a0a0"></div>
<div class="ab" style="left:378px;top:224px;width:589px;height:1px;background:#a0a0a0"></div>
<div class="t" style="left:333.00px;top:212px;font-size:11px;font-weight:bold;">4</div>
<div class="t" style="left:380.00px;top:212px;font-size:11px;font-weight:bold;color:#0000b8;">MULTZL</div>
<div class="t" style="left:432.00px;top:212px;font-size:11px;font-weight:bold;color:#0000b8;">2</div>
<div class="t" style="left:464.40px;top:212px;font-size:11px;letter-spacing:-0.933px;color:#b00000;">User</div>
<div class="t" style="left:525.00px;top:212px;font-size:11px;letter-spacing:-0.200px;color:#000;">Active</div>
<div class="t" style="left:604.50px;top:212px;font-size:11px;letter-spacing:-0.700px;color:#b00000;">Equals</div>
<div class="ab" style="left:698px;top:209px;width:14px;height:14px;border:1px solid #000;background:#fff"></div>
<div class="t" style="left:780.00px;top:211px;font-size:11px;color:#000;">0.5252</div>
<div class="t" style="left:855.00px;top:211px;font-size:11px;color:#000;">0.0000</div>
<div class="t" style="left:930.00px;top:211px;font-size:11px;color:#000;">1.0000</div>
<div class="ab" style="left:296px;top:224px;width:82px;height:18px;background:#d4d0c8;border:1px solid #404040;box-shadow:inset 1px 1px 0 #fff"></div>
<div class="ab" style="left:462px;top:224px;width:1px;height:17px;background:#a0a0a0"></div>
<div class="ab" style="left:522px;top:224px;width:1px;height:17px;background:#a0a0a0"></div>
<div class="ab" style="left:602px;top:224px;width:1px;height:17px;background:#a0a0a0"></div>
<div class="ab" style="left:667px;top:224px;width:1px;height:17px;background:#a0a0a0"></div>
<div class="ab" style="left:742px;top:224px;width:1px;height:17px;background:#a0a0a0"></div>
<div class="ab" style="left:817px;top:224px;width:1px;height:17px;background:#a0a0a0"></div>
<div class="ab" style="left:892px;top:224px;width:1px;height:17px;background:#a0a0a0"></div>
<div class="ab" style="left:967px;top:224px;width:1px;height:17px;background:#a0a0a0"></div>
<div class="ab" style="left:378px;top:241px;width:589px;height:1px;background:#a0a0a0"></div>
<div class="t" style="left:333.50px;top:229px;font-size:11px;font-weight:bold;">5</div>
<div class="t" style="left:380.00px;top:229px;font-size:11px;font-weight:bold;color:#0000b8;">MULTZL</div>
<div class="t" style="left:432.00px;top:229px;font-size:11px;font-weight:bold;color:#0000b8;">3</div>
<div class="t" style="left:464.40px;top:229px;font-size:11px;letter-spacing:-0.933px;color:#b00000;">User</div>
<div class="t" style="left:525.00px;top:229px;font-size:11px;letter-spacing:-0.200px;color:#000;">Active</div>
<div class="t" style="left:604.50px;top:229px;font-size:11px;letter-spacing:-0.700px;color:#b00000;">Equals</div>
<div class="ab" style="left:698px;top:226px;width:14px;height:14px;border:1px solid #000;background:#fff"></div>
<div class="t" style="left:780.00px;top:228px;font-size:11px;color:#000;">0.2027</div>
<div class="t" style="left:855.00px;top:228px;font-size:11px;color:#000;">0.0000</div>
<div class="t" style="left:930.00px;top:228px;font-size:11px;color:#000;">1.0000</div>
<div class="ab" style="left:296px;top:241px;width:82px;height:18px;background:#d4d0c8;border:1px solid #404040;box-shadow:inset 1px 1px 0 #fff"></div>
<div class="ab" style="left:462px;top:241px;width:1px;height:17px;background:#a0a0a0"></div>
<div class="ab" style="left:522px;top:241px;width:1px;height:17px;background:#a0a0a0"></div>
<div class="ab" style="left:602px;top:241px;width:1px;height:17px;background:#a0a0a0"></div>
<div class="ab" style="left:667px;top:241px;width:1px;height:17px;background:#a0a0a0"></div>
<div class="ab" style="left:742px;top:241px;width:1px;height:17px;background:#a0a0a0"></div>
<div class="ab" style="left:817px;top:241px;width:1px;height:17px;background:#a0a0a0"></div>
<div class="ab" style="left:892px;top:241px;width:1px;height:17px;background:#a0a0a0"></div>
<div class="ab" style="left:967px;top:241px;width:1px;height:17px;background:#a0a0a0"></div>
<div class="ab" style="left:378px;top:258px;width:589px;height:1px;background:#a0a0a0"></div>
<div class="t" style="left:333.50px;top:246px;font-size:11px;font-weight:bold;">6</div>
<div class="t" style="left:380.00px;top:246px;font-size:11px;font-weight:bold;color:#0000b8;">FAULT</div>
<div class="t" style="left:424.00px;top:246px;font-size:11px;font-weight:bold;color:#0000b8;">1</div>
<div class="t" style="left:464.40px;top:246px;font-size:11px;letter-spacing:-0.933px;color:#b00000;">User</div>
<div class="t" style="left:525.00px;top:246px;font-size:11px;letter-spacing:-0.200px;color:#000;">Active</div>
<div class="t" style="left:604.50px;top:246px;font-size:11px;letter-spacing:-0.700px;color:#b00000;">Equals</div>
<div class="ab" style="left:698px;top:243px;width:14px;height:14px;border:1px solid #000;background:#fff"></div>
<div class="t" style="left:780.00px;top:245px;font-size:11px;color:#000;">0.6789</div>
<div class="t" style="left:855.00px;top:245px;font-size:11px;color:#000;">0.0000</div>
<div class="t" style="left:930.00px;top:245px;font-size:11px;color:#000;">1.0100</div>
<div class="ab" style="left:296px;top:258px;width:82px;height:18px;background:#d4d0c8;border:1px solid #404040;box-shadow:inset 1px 1px 0 #fff"></div>
<div class="ab" style="left:462px;top:258px;width:1px;height:17px;background:#a0a0a0"></div>
<div class="ab" style="left:522px;top:258px;width:1px;height:17px;background:#a0a0a0"></div>
<div class="ab" style="left:602px;top:258px;width:1px;height:17px;background:#a0a0a0"></div>
<div class="ab" style="left:667px;top:258px;width:1px;height:17px;background:#a0a0a0"></div>
<div class="ab" style="left:742px;top:258px;width:1px;height:17px;background:#a0a0a0"></div>
<div class="ab" style="left:817px;top:258px;width:1px;height:17px;background:#a0a0a0"></div>
<div class="ab" style="left:892px;top:258px;width:1px;height:17px;background:#a0a0a0"></div>
<div class="ab" style="left:967px;top:258px;width:1px;height:17px;background:#a0a0a0"></div>
<div class="ab" style="left:378px;top:275px;width:589px;height:1px;background:#a0a0a0"></div>
<div class="t" style="left:333.50px;top:263px;font-size:11px;font-weight:bold;">7</div>
<div class="t" style="left:380.00px;top:263px;font-size:11px;font-weight:bold;color:#0000b8;">FAULT</div>
<div class="t" style="left:424.00px;top:263px;font-size:11px;font-weight:bold;color:#0000b8;">2</div>
<div class="t" style="left:464.40px;top:263px;font-size:11px;letter-spacing:-0.933px;color:#b00000;">User</div>
<div class="t" style="left:525.00px;top:263px;font-size:11px;letter-spacing:-0.200px;color:#000;">Active</div>
<div class="t" style="left:604.50px;top:263px;font-size:11px;letter-spacing:-0.700px;color:#b00000;">Equals</div>
<div class="ab" style="left:698px;top:260px;width:14px;height:14px;border:1px solid #000;background:#fff"></div>
<div class="t" style="left:780.00px;top:262px;font-size:11px;color:#000;">0.8465</div>
<div class="t" style="left:855.00px;top:262px;font-size:11px;color:#000;">0.0000</div>
<div class="t" style="left:930.00px;top:262px;font-size:11px;color:#000;">1.0100</div>
<div class="ab" style="left:296px;top:275px;width:82px;height:18px;background:#d4d0c8;border:1px solid #404040;box-shadow:inset 1px 1px 0 #fff"></div>
<div class="ab" style="left:462px;top:275px;width:1px;height:17px;background:#a0a0a0"></div>
<div class="ab" style="left:522px;top:275px;width:1px;height:17px;background:#a0a0a0"></div>
<div class="ab" style="left:602px;top:275px;width:1px;height:17px;background:#a0a0a0"></div>
<div class="ab" style="left:667px;top:275px;width:1px;height:17px;background:#a0a0a0"></div>
<div class="ab" style="left:742px;top:275px;width:1px;height:17px;background:#a0a0a0"></div>
<div class="ab" style="left:817px;top:275px;width:1px;height:17px;background:#a0a0a0"></div>
<div class="ab" style="left:892px;top:275px;width:1px;height:17px;background:#a0a0a0"></div>
<div class="ab" style="left:967px;top:275px;width:1px;height:17px;background:#a0a0a0"></div>
<div class="ab" style="left:378px;top:292px;width:589px;height:1px;background:#a0a0a0"></div>
<div class="t" style="left:333.50px;top:280px;font-size:11px;font-weight:bold;">8</div>
<div class="t" style="left:380.00px;top:280px;font-size:11px;font-weight:bold;color:#0000b8;">FAULT</div>
<div class="t" style="left:424.00px;top:280px;font-size:11px;font-weight:bold;color:#0000b8;">3</div>
<div class="t" style="left:464.40px;top:280px;font-size:11px;letter-spacing:-0.933px;color:#b00000;">User</div>
<div class="t" style="left:525.00px;top:280px;font-size:11px;letter-spacing:-0.200px;color:#000;">Active</div>
<div class="t" style="left:604.50px;top:280px;font-size:11px;letter-spacing:-0.700px;color:#b00000;">Equals</div>
<div class="ab" style="left:698px;top:277px;width:14px;height:14px;border:1px solid #000;background:#fff"></div>
<div class="t" style="left:780.00px;top:279px;font-size:11px;color:#000;">0.0198</div>
<div class="t" style="left:855.00px;top:279px;font-size:11px;color:#000;">0.0000</div>
<div class="t" style="left:930.00px;top:279px;font-size:11px;color:#000;">1.0100</div>
<div class="ab" style="left:296px;top:292px;width:82px;height:18px;background:#d4d0c8;border:1px solid #404040;box-shadow:inset 1px 1px 0 #fff"></div>
<div class="ab" style="left:462px;top:292px;width:1px;height:17px;background:#a0a0a0"></div>
<div class="ab" style="left:522px;top:292px;width:1px;height:17px;background:#a0a0a0"></div>
<div class="ab" style="left:602px;top:292px;width:1px;height:17px;background:#a0a0a0"></div>
<div class="ab" style="left:667px;top:292px;width:1px;height:17px;background:#a0a0a0"></div>
<div class="ab" style="left:742px;top:292px;width:1px;height:17px;background:#a0a0a0"></div>
<div class="ab" style="left:817px;top:292px;width:1px;height:17px;background:#a0a0a0"></div>
<div class="ab" style="left:892px;top:292px;width:1px;height:17px;background:#a0a0a0"></div>
<div class="ab" style="left:967px;top:292px;width:1px;height:17px;background:#a0a0a0"></div>
<div class="ab" style="left:378px;top:309px;width:589px;height:1px;background:#a0a0a0"></div>
<div class="t" style="left:333.50px;top:297px;font-size:11px;font-weight:bold;">9</div>
<div class="t" style="left:380.00px;top:297px;font-size:11px;font-weight:bold;color:#0000b8;">FAULT</div>
<div class="t" style="left:424.00px;top:297px;font-size:11px;font-weight:bold;color:#0000b8;">4</div>
<div class="t" style="left:464.40px;top:297px;font-size:11px;letter-spacing:-0.933px;color:#b00000;">User</div>
<div class="t" style="left:525.00px;top:297px;font-size:11px;letter-spacing:-0.200px;color:#000;">Active</div>
<div class="t" style="left:604.50px;top:297px;font-size:11px;letter-spacing:-0.700px;color:#b00000;">Equals</div>
<div class="ab" style="left:698px;top:294px;width:14px;height:14px;border:1px solid #000;background:#fff"></div>
<div class="t" style="left:780.00px;top:296px;font-size:11px;color:#000;">0.6881</div>
<div class="t" style="left:855.00px;top:296px;font-size:11px;color:#000;">0.0000</div>
<div class="t" style="left:930.00px;top:296px;font-size:11px;color:#000;">1.0100</div>
<div class="ab" style="left:296px;top:309px;width:82px;height:18px;background:#d4d0c8;border:1px solid #404040;box-shadow:inset 1px 1px 0 #fff"></div>
<div class="ab" style="left:462px;top:309px;width:1px;height:17px;background:#a0a0a0"></div>
<div class="ab" style="left:522px;top:309px;width:1px;height:17px;background:#a0a0a0"></div>
<div class="ab" style="left:602px;top:309px;width:1px;height:17px;background:#a0a0a0"></div>
<div class="ab" style="left:667px;top:309px;width:1px;height:17px;background:#a0a0a0"></div>
<div class="ab" style="left:742px;top:309px;width:1px;height:17px;background:#a0a0a0"></div>
<div class="ab" style="left:817px;top:309px;width:1px;height:17px;background:#a0a0a0"></div>
<div class="ab" style="left:892px;top:309px;width:1px;height:17px;background:#a0a0a0"></div>
<div class="ab" style="left:967px;top:309px;width:1px;height:17px;background:#a0a0a0"></div>
<div class="ab" style="left:378px;top:326px;width:589px;height:1px;background:#a0a0a0"></div>
<div class="t" style="left:330.50px;top:314px;font-size:11px;font-weight:bold;">10</div>
<div class="t" style="left:380.00px;top:314px;font-size:11px;font-weight:bold;color:#0000b8;">SOWCR</div>
<div class="t" style="left:464.40px;top:314px;font-size:11px;letter-spacing:-0.933px;color:#b00000;">User</div>
<div class="t" style="left:525.00px;top:314px;font-size:11px;letter-spacing:-0.200px;color:#000;">Active</div>
<div class="t" style="left:604.50px;top:314px;font-size:11px;letter-spacing:-0.700px;color:#b00000;">Equals</div>
<div class="ab" style="left:698px;top:311px;width:14px;height:14px;border:1px solid #000;background:#fff"></div>
<div class="t" style="left:780.00px;top:313px;font-size:11px;color:#000;">0.2759</div>
<div class="t" style="left:855.00px;top:313px;font-size:11px;color:#000;">0.2000</div>
<div class="t" style="left:930.00px;top:313px;font-size:11px;color:#000;">0.4000</div>
<div class="ab" style="left:296px;top:326px;width:82px;height:18px;background:#d4d0c8;border:1px solid #404040;box-shadow:inset 1px 1px 0 #fff"></div>
<div class="ab" style="left:462px;top:326px;width:1px;height:17px;background:#a0a0a0"></div>
<div class="ab" style="left:522px;top:326px;width:1px;height:17px;background:#a0a0a0"></div>
<div class="ab" style="left:602px;top:326px;width:1px;height:17px;background:#a0a0a0"></div>
<div class="ab" style="left:667px;top:326px;width:1px;height:17px;background:#a0a0a0"></div>
<div class="ab" style="left:742px;top:326px;width:1px;height:17px;background:#a0a0a0"></div>
<div class="ab" style="left:817px;top:326px;width:1px;height:17px;background:#a0a0a0"></div>
<div class="ab" style="left:892px;top:326px;width:1px;height:17px;background:#a0a0a0"></div>
<div class="ab" style="left:967px;top:326px;width:1px;height:17px;background:#a0a0a0"></div>
<div class="ab" style="left:378px;top:343px;width:589px;height:1px;background:#a0a0a0"></div>
<div class="t" style="left:330.50px;top:331px;font-size:11px;font-weight:bold;">11</div>
<div class="t" style="left:380.00px;top:331px;font-size:11px;font-weight:bold;color:#0000b8;">SOGCR</div>
<div class="t" style="left:464.40px;top:331px;font-size:11px;letter-spacing:-0.933px;color:#b00000;">User</div>
<div class="t" style="left:525.00px;top:331px;font-size:11px;letter-spacing:-0.200px;color:#000;">Active</div>
<div class="t" style="left:604.50px;top:331px;font-size:11px;letter-spacing:-0.700px;color:#b00000;">Equals</div>
<div class="ab" style="left:698px;top:328px;width:14px;height:14px;border:1px solid #000;background:#fff"></div>
<div class="t" style="left:780.00px;top:330px;font-size:11px;color:#000;">0.3495</div>
<div class="t" style="left:855.00px;top:330px;font-size:11px;color:#000;">0.1000</div>
<div class="t" style="left:930.00px;top:330px;font-size:11px;color:#000;">0.4000</div>
<div class="ab" style="left:296px;top:343px;width:82px;height:18px;background:#d4d0c8;border:1px solid #404040;box-shadow:inset 1px 1px 0 #fff"></div>
<div class="ab" style="left:462px;top:343px;width:1px;height:17px;background:#a0a0a0"></div>
<div class="ab" style="left:522px;top:343px;width:1px;height:17px;background:#a0a0a0"></div>
<div class="ab" style="left:602px;top:343px;width:1px;height:17px;background:#a0a0a0"></div>
<div class="ab" style="left:667px;top:343px;width:1px;height:17px;background:#a0a0a0"></div>
<div class="ab" style="left:742px;top:343px;width:1px;height:17px;background:#a0a0a0"></div>
<div class="ab" style="left:817px;top:343px;width:1px;height:17px;background:#a0a0a0"></div>
<div class="ab" style="left:892px;top:343px;width:1px;height:17px;background:#a0a0a0"></div>
<div class="ab" style="left:967px;top:343px;width:1px;height:17px;background:#a0a0a0"></div>
<div class="ab" style="left:378px;top:360px;width:589px;height:1px;background:#a0a0a0"></div>
<div class="t" style="left:330.50px;top:348px;font-size:11px;font-weight:bold;">12</div>
<div class="t" style="left:380.00px;top:348px;font-size:11px;font-weight:bold;color:#0000b8;">KRW</div>
<div class="t" style="left:464.40px;top:348px;font-size:11px;letter-spacing:-0.933px;color:#b00000;">User</div>
<div class="t" style="left:525.00px;top:348px;font-size:11px;letter-spacing:-0.200px;color:#000;">Active</div>
<div class="t" style="left:604.50px;top:348px;font-size:11px;letter-spacing:-0.700px;color:#b00000;">Equals</div>
<div class="ab" style="left:698px;top:345px;width:14px;height:14px;border:1px solid #000;background:#fff"></div>
<div class="t" style="left:780.00px;top:347px;font-size:11px;color:#000;">0.2508</div>
<div class="t" style="left:855.00px;top:347px;font-size:11px;color:#000;">0.1000</div>
<div class="t" style="left:930.00px;top:347px;font-size:11px;color:#000;">0.4000</div>
<div class="ab" style="left:296px;top:360px;width:82px;height:18px;background:#d4d0c8;border:1px solid #404040;box-shadow:inset 1px 1px 0 #fff"></div>
<div class="ab" style="left:378px;top:361px;width:589px;height:16px;background:#0a246a"></div>
<div class="ab" style="left:462px;top:360px;width:1px;height:17px;background:#a0a0a0"></div>
<div class="ab" style="left:522px;top:360px;width:1px;height:17px;background:#a0a0a0"></div>
<div class="ab" style="left:602px;top:360px;width:1px;height:17px;background:#a0a0a0"></div>
<div class="ab" style="left:667px;top:360px;width:1px;height:17px;background:#a0a0a0"></div>
<div class="ab" style="left:742px;top:360px;width:1px;height:17px;background:#a0a0a0"></div>
<div class="ab" style="left:817px;top:360px;width:1px;height:17px;background:#a0a0a0"></div>
<div class="ab" style="left:892px;top:360px;width:1px;height:17px;background:#a0a0a0"></div>
<div class="ab" style="left:967px;top:360px;width:1px;height:17px;background:#a0a0a0"></div>
<div class="ab" style="left:378px;top:377px;width:589px;height:1px;background:#a0a0a0"></div>
<div class="t" style="left:330.50px;top:365px;font-size:11px;font-weight:bold;">13</div>
<div class="t" style="left:380.00px;top:365px;font-size:11px;font-weight:bold;color:#fff;">KRW</div>
<div class="t" style="left:414.50px;top:365px;font-size:11px;font-weight:bold;color:#fff;">L</div>
<div class="t" style="left:464.40px;top:365px;font-size:11px;letter-spacing:-0.933px;color:#fff;">User</div>
<div class="t" style="left:525.00px;top:365px;font-size:11px;letter-spacing:-0.200px;color:#fff;">Active</div>
<div class="t" style="left:604.50px;top:365px;font-size:11px;letter-spacing:-0.700px;color:#fff;">Equals</div>
<div class="ab" style="left:698px;top:362px;width:14px;height:14px;border:1px solid #1a2a70;background:#0a246a"></div>
<div class="t" style="left:780.00px;top:364px;font-size:11px;color:#fff;">0.3128</div>
<div class="t" style="left:855.00px;top:364px;font-size:11px;color:#fff;">0.1000</div>
<div class="t" style="left:930.00px;top:364px;font-size:11px;color:#fff;">0.4000</div>
<div class="ab" style="left:296px;top:377px;width:82px;height:18px;background:#d4d0c8;border:1px solid #404040;box-shadow:inset 1px 1px 0 #fff"></div>
<div class="ab" style="left:462px;top:377px;width:1px;height:17px;background:#a0a0a0"></div>
<div class="ab" style="left:522px;top:377px;width:1px;height:17px;background:#a0a0a0"></div>
<div class="ab" style="left:602px;top:377px;width:1px;height:17px;background:#a0a0a0"></div>
<div class="ab" style="left:667px;top:377px;width:1px;height:17px;background:#a0a0a0"></div>
<div class="ab" style="left:742px;top:377px;width:1px;height:17px;background:#a0a0a0"></div>
<div class="ab" style="left:817px;top:377px;width:1px;height:17px;background:#a0a0a0"></div>
<div class="ab" style="left:892px;top:377px;width:1px;height:17px;background:#a0a0a0"></div>
<div class="ab" style="left:967px;top:377px;width:1px;height:17px;background:#a0a0a0"></div>
<div class="ab" style="left:378px;top:394px;width:589px;height:1px;background:#a0a0a0"></div>
<div class="t" style="left:330.00px;top:382px;font-size:11px;font-weight:bold;">14</div>
<div class="t" style="left:380.00px;top:382px;font-size:11px;font-weight:bold;color:#0000b8;">SOGCR</div>
<div class="t" style="left:427.50px;top:382px;font-size:11px;font-weight:bold;color:#0000b8;">L</div>
<div class="t" style="left:464.40px;top:382px;font-size:11px;letter-spacing:-0.933px;color:#b00000;">User</div>
<div class="t" style="left:525.00px;top:382px;font-size:11px;letter-spacing:-0.200px;color:#000;">Active</div>
<div class="t" style="left:604.50px;top:382px;font-size:11px;letter-spacing:-0.700px;color:#b00000;">Equals</div>
<div class="ab" style="left:698px;top:379px;width:14px;height:14px;border:1px solid #000;background:#fff"></div>
<div class="t" style="left:780.00px;top:381px;font-size:11px;color:#000;">0.2287</div>
<div class="t" style="left:855.00px;top:381px;font-size:11px;color:#000;">0.1000</div>
<div class="t" style="left:930.00px;top:381px;font-size:11px;color:#000;">0.4000</div>
<div class="ab" style="left:296px;top:394px;width:82px;height:18px;background:#d4d0c8;border:1px solid #404040;box-shadow:inset 1px 1px 0 #fff"></div>
<div class="ab" style="left:462px;top:394px;width:1px;height:17px;background:#a0a0a0"></div>
<div class="ab" style="left:522px;top:394px;width:1px;height:17px;background:#a0a0a0"></div>
<div class="ab" style="left:602px;top:394px;width:1px;height:17px;background:#a0a0a0"></div>
<div class="ab" style="left:667px;top:394px;width:1px;height:17px;background:#a0a0a0"></div>
<div class="ab" style="left:742px;top:394px;width:1px;height:17px;background:#a0a0a0"></div>
<div class="ab" style="left:817px;top:394px;width:1px;height:17px;background:#a0a0a0"></div>
<div class="ab" style="left:892px;top:394px;width:1px;height:17px;background:#a0a0a0"></div>
<div class="ab" style="left:967px;top:394px;width:1px;height:17px;background:#a0a0a0"></div>
<div class="ab" style="left:378px;top:411px;width:589px;height:1px;background:#a0a0a0"></div>
<div class="t" style="left:330.50px;top:399px;font-size:11px;font-weight:bold;">15</div>
<div class="t" style="left:380.00px;top:399px;font-size:11px;font-weight:bold;color:#0000b8;">PBVD</div>
<div class="t" style="left:464.40px;top:399px;font-size:11px;letter-spacing:-0.933px;color:#b00000;">User</div>
<div class="t" style="left:525.00px;top:399px;font-size:11px;letter-spacing:-0.200px;color:#000;">Active</div>
<div class="t" style="left:604.50px;top:399px;font-size:11px;letter-spacing:-0.700px;color:#b00000;">Equals</div>
<div class="ab" style="left:698px;top:396px;width:14px;height:14px;border:1px solid #000;background:#fff"></div>
<div class="t" style="left:762.00px;top:398px;font-size:11px;color:#000;">3476.1543</div>
<div class="t" style="left:837.00px;top:398px;font-size:11px;color:#000;">3400.0000</div>
<div class="t" style="left:912.00px;top:398px;font-size:11px;color:#000;">3650.0000</div>
<div class="ab" style="left:296px;top:411px;width:82px;height:18px;background:#d4d0c8;border:1px solid #404040;box-shadow:inset 1px 1px 0 #fff"></div>
<div class="ab" style="left:462px;top:411px;width:1px;height:17px;background:#a0a0a0"></div>
<div class="ab" style="left:522px;top:411px;width:1px;height:17px;background:#a0a0a0"></div>
<div class="ab" style="left:602px;top:411px;width:1px;height:17px;background:#a0a0a0"></div>
<div class="ab" style="left:667px;top:411px;width:1px;height:17px;background:#a0a0a0"></div>
<div class="ab" style="left:742px;top:411px;width:1px;height:17px;background:#a0a0a0"></div>
<div class="ab" style="left:817px;top:411px;width:1px;height:17px;background:#a0a0a0"></div>
<div class="ab" style="left:892px;top:411px;width:1px;height:17px;background:#a0a0a0"></div>
<div class="ab" style="left:967px;top:411px;width:1px;height:17px;background:#a0a0a0"></div>
<div class="ab" style="left:378px;top:428px;width:589px;height:1px;background:#a0a0a0"></div>
<div class="t" style="left:330.50px;top:416px;font-size:11px;font-weight:bold;">16</div>
<div class="t" style="left:380.00px;top:416px;font-size:11px;font-weight:bold;color:#0000b8;">KAQUI</div>
<div class="t" style="left:424.00px;top:416px;font-size:11px;font-weight:bold;color:#0000b8;">1</div>
<div class="t" style="left:464.40px;top:416px;font-size:11px;letter-spacing:-0.933px;color:#b00000;">User</div>
<div class="t" style="left:525.00px;top:416px;font-size:11px;letter-spacing:-0.200px;color:#000;">Active</div>
<div class="t" style="left:604.50px;top:416px;font-size:11px;letter-spacing:-0.700px;color:#b00000;">Equals</div>
<div class="ab" style="left:698px;top:413px;width:14px;height:14px;border:1px solid #000;background:#fff"></div>
<div class="t" style="left:768.00px;top:415px;font-size:11px;color:#000;">383.3592</div>
<div class="t" style="left:855.00px;top:415px;font-size:11px;color:#000;">5.0000</div>
<div class="t" style="left:912.00px;top:415px;font-size:11px;color:#000;">2000.0000</div>
<div class="ab" style="left:296px;top:428px;width:82px;height:18px;background:#d4d0c8;border:1px solid #404040;box-shadow:inset 1px 1px 0 #fff"></div>
<div class="ab" style="left:462px;top:428px;width:1px;height:17px;background:#a0a0a0"></div>
<div class="ab" style="left:522px;top:428px;width:1px;height:17px;background:#a0a0a0"></div>
<div class="ab" style="left:602px;top:428px;width:1px;height:17px;background:#a0a0a0"></div>
<div class="ab" style="left:667px;top:428px;width:1px;height:17px;background:#a0a0a0"></div>
<div class="ab" style="left:742px;top:428px;width:1px;height:17px;background:#a0a0a0"></div>
<div class="ab" style="left:817px;top:428px;width:1px;height:17px;background:#a0a0a0"></div>
<div class="ab" style="left:892px;top:428px;width:1px;height:17px;background:#a0a0a0"></div>
<div class="ab" style="left:967px;top:428px;width:1px;height:17px;background:#a0a0a0"></div>
<div class="ab" style="left:378px;top:445px;width:589px;height:1px;background:#a0a0a0"></div>
<div class="t" style="left:330.50px;top:433px;font-size:11px;font-weight:bold;">17</div>
<div class="t" style="left:380.00px;top:433px;font-size:11px;font-weight:bold;color:#0000b8;">KAQUI</div>
<div class="t" style="left:424.00px;top:433px;font-size:11px;font-weight:bold;color:#0000b8;">2</div>
<div class="t" style="left:464.40px;top:433px;font-size:11px;letter-spacing:-0.933px;color:#b00000;">User</div>
<div class="t" style="left:525.00px;top:433px;font-size:11px;letter-spacing:-0.200px;color:#000;">Active</div>
<div class="t" style="left:604.50px;top:433px;font-size:11px;letter-spacing:-0.700px;color:#b00000;">Equals</div>
<div class="ab" style="left:698px;top:430px;width:14px;height:14px;border:1px solid #000;background:#fff"></div>
<div class="t" style="left:768.00px;top:432px;font-size:11px;color:#000;">390.8952</div>
<div class="t" style="left:855.00px;top:432px;font-size:11px;color:#000;">5.0000</div>
<div class="t" style="left:912.00px;top:432px;font-size:11px;color:#000;">2000.0000</div>
<div class="ab" style="left:602px;top:361px;width:66px;height:16px;border:1px solid #fff"></div>
</div>
<div class="ab r2" style="left:976px;top:126px;width:15px;height:15px;"><svg class="ab" style="left:-1px;top:-1px" width="15" height="15"><path d="M3.5 9.5H10.5L7.0 6.0Z" fill="#000"/></svg></div>
<div class="ab r1" style="left:976px;top:141px;width:15px;height:154px;"></div>
<div class="ab chk" style="left:976px;top:295px;width:15px;height:132px;"></div>
<div class="ab r2" style="left:976px;top:427px;width:15px;height:15px;"><svg class="ab" style="left:-1px;top:-1px" width="15" height="15"><path d="M3.5 5.5H10.5L7.0 9.0Z" fill="#000"/></svg></div>
<div class="ab r2" style="left:296px;top:443px;width:16px;height:15px;"><svg class="ab" style="left:-1px;top:-1px" width="16" height="15"><path d="M9.5 3.5V10.5L6.0 7.0Z" fill="#000"/></svg></div>
<div class="ab r1" style="left:312px;top:443px;width:630px;height:15px;"></div>
<div class="ab chk" style="left:942px;top:443px;width:16px;height:15px;"></div>
<div class="ab r2" style="left:958px;top:443px;width:16px;height:15px;"><svg class="ab" style="left:-1px;top:-1px" width="16" height="15"><path d="M6.0 3.5V10.5L9.5 7.0Z" fill="#000"/></svg></div>
<div class="ab" style="left:296px;top:493px;width:299px;height:246px;border:1px solid #808080;box-shadow:inset 1px 1px 0 #fff, 1px 1px 0 #fff"></div>
<div class="ab" style="left:302px;top:486px;width:95px;height:14px;background:#d4d0c8"></div>
<div class="t" style="left:305.50px;top:486px;font-size:13px;font-weight:bold;letter-spacing:0.292px;">Table Display</div>
<div class="rad on" style="left:307px;top:513px"></div>
<div class="t" style="left:324.50px;top:515px;font-size:11px;letter-spacing:0.857px;">Show All</div>
<div class="rad" style="left:307px;top:533px"></div>
<div class="t" style="left:324.50px;top:535px;font-size:11px;letter-spacing:0.827px;">Show Active Only</div>
<div class="rad" style="left:307px;top:553px"></div>
<div class="t" style="left:324.50px;top:555px;font-size:11px;letter-spacing:0.860px;">Show Semi-Active Only</div>
<div class="rad" style="left:307px;top:573px"></div>
<div class="t" style="left:324.50px;top:575px;font-size:11px;letter-spacing:0.865px;">Show Inactive Only</div>
<div class="t" style="left:306.00px;top:607px;font-size:13px;font-weight:bold;letter-spacing:0.333px;">Filters</div>
<div class="t" style="left:305.60px;top:637px;font-size:11px;letter-spacing:-0.500px;">Name:</div>
<div class="t" style="left:305.60px;top:667px;font-size:11px;letter-spacing:-0.467px;">Domain:</div>
<div class="ab sk" style="left:356px;top:632px;width:220px;height:20px;background:#fff"></div>
<div class="t" style="left:361.00px;top:635px;font-size:14px;font-weight:bold;">*</div>
<div class="ab sk" style="left:356px;top:662px;width:220px;height:20px;background:#fff"></div>
<div class="t" style="left:361.00px;top:665px;font-size:14px;font-weight:bold;">*</div>
<div class="ab" style="left:321px;top:700px;width:100px;height:25px;border:1px solid #000;box-shadow:inset 1px 1px 0 #fff, inset -1px -1px 0 #808080;background:#d4d0c8"></div>
<div class="t" style="left:365.60px;top:707px;font-size:12px;font-weight:bold;letter-spacing:0.880px;">Filter</div>
<svg class="ab" style="left:342px;top:703px;" width="19" height="18" viewBox="0 0 19 18"><path d="M5 1.5H17.5L12.5 7.5V13L9.5 10.5V7.5Z" fill="#fff" stroke="#000" stroke-width="1.2"/><path d="M6 3H16" stroke="#70a0c0"/><path d="M1 10.5H5V8L9 12L5 16V13.5H1Z" fill="#000"/></svg>
<div class="ab" style="left:461px;top:700px;width:108px;height:25px;border:1px solid #000;box-shadow:inset 1px 1px 0 #fff, inset -1px -1px 0 #808080;background:#d4d0c8"></div>
<div class="t" style="left:488.70px;top:707px;font-size:12px;font-weight:bold;letter-spacing:0.827px;">Filter Clear</div>
<svg class="ab" style="left:466px;top:702px;" width="18" height="20" viewBox="0 0 18 20"><path d="M3 4H15L14 18H4Z" fill="#c8d4e8" stroke="#607090"/><path d="M5 5H7V17H5Z" fill="#f0f4ff"/><ellipse cx="9" cy="4" rx="6.5" ry="2" fill="#d8e0f0" stroke="#607090"/><path d="M10 2L12 0L13 3Z" fill="#e0c040"/><path d="M6 10Q9 6 12 10M12 12Q9 16 6 12" stroke="#1040e0" stroke-width="1.8" fill="none"/></svg>
<div class="ab" style="left:616px;top:493px;width:339px;height:186px;border:1px solid #808080;box-shadow:inset 1px 1px 0 #fff, 1px 1px 0 #fff"></div>
<div class="ab" style="left:622px;top:486px;width:190px;height:14px;background:#d4d0c8"></div>
<div class="t" style="left:710.60px;top:486px;font-size:13px;font-weight:bold;letter-spacing:0.723px;">(Selected Set)</div>
<div class="t" style="left:630.00px;top:486px;font-size:13px;font-weight:bold;">Table Action</div>
<div class="rad" style="left:627px;top:514px"></div>
<div class="t" style="left:644.00px;top:516px;font-size:11px;letter-spacing:0.841px;">Set Modifier Value</div>
<div class="rad" style="left:627px;top:534px"></div>
<div class="t" style="left:644.00px;top:536px;font-size:11px;letter-spacing:0.912px;">Set Minimum Value</div>
<div class="rad" style="left:627px;top:554px"></div>
<div class="t" style="left:644.00px;top:556px;font-size:11px;letter-spacing:0.981px;">Set Maximum Value</div>
<div class="rad" style="left:627px;top:574px"></div>
<div class="t" style="left:644.00px;top:576px;font-size:11px;letter-spacing:0.900px;">Activate</div>
<div class="rad" style="left:627px;top:594px"></div>
<div class="t" style="left:644.00px;top:596px;font-size:11px;letter-spacing:0.958px;">Semi-Activate</div>
<div class="rad" style="left:627px;top:614px"></div>
<div class="t" style="left:644.00px;top:616px;font-size:11px;letter-spacing:0.922px;">Deactivate</div>
<div class="rad" style="left:627px;top:634px"></div>
<div class="t" style="left:644.00px;top:636px;font-size:11px;letter-spacing:0.900px;">Delete</div>
<div class="rad" style="left:627px;top:654px"></div>
<div class="t" style="left:644.00px;top:656px;font-size:11px;letter-spacing:0.667px;">Plot Modifier</div>
<div class="t" style="left:791.70px;top:516px;font-size:10px;letter-spacing:0.500px;">Modifier:</div>
<div class="ab sk" style="left:856px;top:513px;width:80px;height:16px;background:#fff"></div>
<div class="t" style="left:860.00px;top:517px;font-size:11px;color:#000;">1</div>
<div class="t" style="left:791.70px;top:536px;font-size:10px;letter-spacing:0.514px;">Minimum:</div>
<div class="ab sk" style="left:856px;top:533px;width:80px;height:16px;background:#d4d0c8"></div>
<div class="t" style="left:860.00px;top:537px;font-size:11px;color:#808080;">1</div>
<div class="t" style="left:791.70px;top:556px;font-size:10px;letter-spacing:0.600px;">Maximum:</div>
<div class="ab sk" style="left:856px;top:553px;width:80px;height:16px;background:#d4d0c8"></div>
<div class="t" style="left:860.00px;top:557px;font-size:11px;color:#808080;">1</div>
<div class="ab" style="left:816px;top:640px;width:120px;height:25px;border:1px solid #000;box-shadow:inset 1px 1px 0 #fff, inset -1px -1px 0 #808080;background:#d4d0c8"></div>
<div class="t" style="left:845.70px;top:647px;font-size:12px;font-weight:bold;letter-spacing:0.609px;">Apply Action</div>
<svg class="ab" style="left:821px;top:643px;" width="19" height="19" viewBox="0 0 19 19"><circle cx="9.5" cy="9.5" r="8" fill="#30a030" stroke="#186018"/><ellipse cx="9" cy="6.5" rx="5.5" ry="3.5" fill="#90e070"/><path d="M4 11Q9 15 15 9" stroke="#e8c030" stroke-width="2.4" fill="none"/></svg>
<div class="ab" style="left:489px;top:370px;width:212px;height:150px;border-style:solid;border-width:1px;border-color:#d4d0c8 #404040 #404040 #d4d0c8;box-shadow:inset 1px 1px 0 #fff, inset -1px -1px 0 #808080;background:#d4d0c8;z-index:10"></div>
<div class="ab" style="left:492px;top:376px;width:206px;height:2px;border-top:1px solid #808080;border-bottom:1px solid #fff;z-index:11"></div>
<div class="ab" style="left:492px;top:405px;width:206px;height:2px;border-top:1px solid #808080;border-bottom:1px solid #fff;z-index:11"></div>
<div class="ab" style="left:492px;top:434px;width:206px;height:2px;border-top:1px solid #808080;border-bottom:1px solid #fff;z-index:11"></div>
<div class="ab" style="left:492px;top:463px;width:206px;height:2px;border-top:1px solid #808080;border-bottom:1px solid #fff;z-index:11"></div>
<div class="ab" style="left:492px;top:513px;width:206px;height:2px;border-top:1px solid #808080;border-bottom:1px solid #fff;z-index:11"></div>
<div class="t" style="left:521.60px;top:387px;font-size:11px;letter-spacing:0.100px;z-index:11;">Infos</div>
<div class="t" style="left:521.60px;top:416px;font-size:11px;letter-spacing:-0.320px;color:#808080;z-index:11;text-shadow:1px 1px 0 #fff">Delete</div>
<div class="t" style="left:521.60px;top:445px;font-size:11px;letter-spacing:-0.325px;z-index:11;">Plot Modifier</div>
<div class="t" style="left:518.40px;top:474px;font-size:11px;letter-spacing:-0.073px;color:#808080;z-index:11;text-shadow:1px 1px 0 #fff">Import Modifiers And Status</div>
<div class="t" style="left:518.40px;top:494px;font-size:11px;letter-spacing:-0.073px;z-index:11;">Export Modifiers And Status</div>
<svg class="ab" style="left:494px;top:384px;z-index:11;" width="16" height="16" viewBox="0 0 16 16"><path d="M8 0.5a7 6.2 0 1 1-2.6 12L3.5 15.5L3.8 11.2A7 6.2 0 0 1 8 0.5z" fill="#fff" stroke="#000"/><circle cx="8" cy="3.8" r="1.3" fill="#0000c0"/><path d="M6.3 5.8H9V10.3H10V11.3H6.3V10.3H7.3V6.8H6.3Z" fill="#0000c0"/></svg>
<svg class="ab" style="left:495px;top:414px;z-index:11;" width="14" height="15" viewBox="0 0 14 15"><path d="M2.5 2L11.5 13M11.5 2L2.5 13" stroke="#e8204a" stroke-width="3.2" stroke-linecap="round"/></svg>
<svg class="ab" style="left:494px;top:442px;z-index:11;" width="16" height="16" viewBox="0 0 16 16"><rect width="16" height="16" fill="#fff"/><path d="M1.5 1V14.5H15" stroke="#000" fill="none"/><path d="M3 13L6 8L8 10L11 5L14 7" stroke="#600000" fill="none"/></svg>
<svg class="ab" style="left:493px;top:471px;z-index:11;" width="17" height="16" viewBox="0 0 17 16"><rect x="0.5" y="5.5" width="9" height="10" fill="#fff" stroke="#000"/><rect x="2.5" y="9.5" width="5" height="3" fill="none" stroke="#000"/><path d="M10.5 0.5H14L16 2.5V9H10.5Z" fill="#fff" stroke="#000"/><path d="M12.5 10V13.5H9.5" stroke="#0000a0" fill="none"/></svg>
<svg class="ab" style="left:495px;top:491px;z-index:11;" width="16" height="17" viewBox="0 0 16 17"><rect x="0.5" y="1.5" width="11" height="14" fill="#dde4f0" stroke="#000"/><path d="M5 13L13 3L15 5L7 15L4 16Z" fill="#f0c040" stroke="#603010"/></svg>
<div class="ab" style="left:249px;top:843px;width:1029px;height:131px;border-style:solid;border-width:1px;border-color:#404040 #fff #fff #404040"></div>
<div class="ab" style="left:251px;top:845px;width:1025px;height:127px;border-style:solid;border-width:1px;border-color:#404040 #d4d0c8 #d4d0c8 #404040;box-shadow:inset 1px 1px 0 #808080"></div>
<div class="ab" style="left:254px;top:846px;width:1004px;height:108px;background:#fff"></div>
<div class="t" style="left:255.20px;top:849px;font-size:12px;font-weight:bold;font-family:'Liberation Serif',serif;letter-spacing:-0.650px;">MESSAGE</div>
<div class="ab" style="left:255px;top:862px;width:56px;height:1px;background:#000"></div>
<div class="t" style="left:314.00px;top:850px;font-size:11px;font-weight:bold;">:</div>
<div class="t" style="left:321.60px;top:850px;font-size:11px;letter-spacing:-0.030px;">Simulation Started At Monday, 22 August 2005 @ 14:14:39</div>
<div class="t" style="left:255.20px;top:865px;font-size:12px;font-weight:bold;font-family:'Liberation Serif',serif;letter-spacing:-0.650px;">MESSAGE</div>
<div class="ab" style="left:255px;top:878px;width:56px;height:1px;background:#000"></div>
<div class="t" style="left:314.00px;top:866px;font-size:11px;font-weight:bold;">:</div>
<div class="t" style="left:321.60px;top:866px;font-size:11px;letter-spacing:-0.095px;">Run WORKSHOP2_2.DATA Terminated Correctly At Monday, 22 August 2005 @ 14:16:48</div>
<div class="t" style="left:255.20px;top:881px;font-size:12px;font-weight:bold;font-family:'Liberation Serif',serif;letter-spacing:-0.650px;">MESSAGE</div>
<div class="ab" style="left:255px;top:894px;width:56px;height:1px;background:#000"></div>
<div class="t" style="left:314.00px;top:882px;font-size:11px;font-weight:bold;">:</div>
<div class="t" style="left:321.60px;top:882px;font-size:11px;letter-spacing:-0.068px;">Input File Is Of Format: RSM (Standard)</div>
<div class="t" style="left:255.20px;top:897px;font-size:12px;font-weight:bold;font-family:'Liberation Serif',serif;letter-spacing:-0.650px;">MESSAGE</div>
<div class="ab" style="left:255px;top:910px;width:56px;height:1px;background:#000"></div>
<div class="t" style="left:314.00px;top:898px;font-size:11px;font-weight:bold;">:</div>
<div class="t" style="left:321.60px;top:898px;font-size:11px;letter-spacing:-0.115px;">Input File Correctly Scanned. File Contains Data For 532 Properties</div>
<div class="t" style="left:255.20px;top:913px;font-size:12px;font-weight:bold;font-family:'Liberation Serif',serif;letter-spacing:-0.650px;">MESSAGE</div>
<div class="ab" style="left:255px;top:926px;width:56px;height:1px;background:#000"></div>
<div class="t" style="left:314.00px;top:914px;font-size:11px;font-weight:bold;">:</div>
<div class="t" style="left:321.60px;top:914px;font-size:11px;letter-spacing:-0.189px;">Scanning Operations Took 0.53 Seconds</div>
<div class="t" style="left:255.20px;top:929px;font-size:12px;font-weight:bold;font-family:'Liberation Serif',serif;letter-spacing:-0.650px;">MESSAGE</div>
<div class="ab" style="left:255px;top:942px;width:56px;height:1px;background:#000"></div>
<div class="t" style="left:314.00px;top:930px;font-size:11px;font-weight:bold;">:</div>
<div class="t" style="left:321.60px;top:930px;font-size:11px;letter-spacing:-0.030px;">Simulation Started At Monday, 22 August 2005 @ 14:16:53</div>
<div class="ab r2" style="left:1258px;top:846px;width:16px;height:16px;"><svg class="ab" style="left:-1px;top:-1px" width="16" height="16"><path d="M4.0 10.0H11.0L7.5 6.5Z" fill="#000"/></svg></div>
<div class="ab chk" style="left:1258px;top:862px;width:16px;height:69px;"></div>
<div class="ab r2" style="left:1258px;top:931px;width:16px;height:7px;"></div>
<div class="ab r2" style="left:1258px;top:938px;width:16px;height:16px;"><svg class="ab" style="left:-1px;top:-1px" width="16" height="16"><path d="M4.0 6.0H11.0L7.5 9.5Z" fill="#000"/></svg></div>
<div class="ab chk" style="left:254px;top:954px;width:988px;height:16px;"></div>
<div class="ab r2" style="left:1242px;top:954px;width:16px;height:16px;"><svg class="ab" style="left:-1px;top:-1px" width="16" height="16"><path d="M6.0 4.0V11.0L9.5 7.5Z" fill="#808080"/></svg></div>
<div class="ab r2" style="left:254px;top:954px;width:16px;height:16px;"><svg class="ab" style="left:-1px;top:-1px" width="16" height="16"><path d="M9.5 4.0V11.0L6.0 7.5Z" fill="#808080"/></svg></div>
<div class="ab" style="left:1258px;top:954px;width:16px;height:16px;background:#d4d0c8"></div>
<div class="ab" style="left:0px;top:977px;width:1280px;height:1px;background:#d4d0c8"></div>
<div class="ab" style="left:0px;top:978px;width:853px;height:17px;border-style:solid;border-width:1px;border-color:#808080 #fff #fff #808080"></div>
<div class="ab" style="left:855px;top:978px;width:425px;height:17px;border-style:solid;border-width:1px;border-color:#808080 #fff #fff #808080"></div>
<div class="t" style="left:1.80px;top:982px;font-size:11px;letter-spacing:-0.290px;">User Name: GAVANA ANDREA, Computer Name: ENWS01799575, User Logon: ag12905</div>
<div class="t" style="left:857.50px;top:982px;font-size:11px;letter-spacing:0.074px;">Monday, 22 August 2005 &nbsp;@ &nbsp;14:18:18</div>
<div class="ab" style="left:0px;top:995px;width:1280px;height:29px;background:#d4d0c8;box-shadow:inset 0 1px 0 #d4d0c8, inset 0 2px 0 #fff"></div>
<div class="ab r1" style="left:2px;top:1000px;width:55px;height:22px;"></div>
<svg class="ab" style="left:5px;top:1003px;" width="18" height="16" viewBox="0 0 18 16"><path d="M7 3Q10 0.5 12.5 2Q15 3.5 17.5 1.5V13.5Q15 15.5 12.5 14Q10 12.5 7 14.5Z" fill="#000"/><path d="M8.3 4Q10 2.6 11.8 3.3V8Q10 7.3 8.3 8.6Z" fill="#e03018"/><path d="M13 3.6Q14.6 4.3 16.3 3.3V7.8Q14.6 8.8 13 8.2Z" fill="#40b030"/><path d="M8.3 9.6Q10 8.3 11.8 9V13Q10 12.3 8.3 13.4Z" fill="#2038d8"/><path d="M13 9.2Q14.6 9.8 16.3 8.8V12.6Q14.6 13.6 13 13Z" fill="#e8d838"/><path d="M1.5 4.5H6M1.5 7.5H6M1.5 10.5H6M1.5 13H6" stroke="#000" stroke-width="1.2" stroke-dasharray="1.2 1"/><path d="M2.5 7.5H6" stroke="#e03018" stroke-width="1.2"/><path d="M2.5 10.5H6" stroke="#2038d8" stroke-width="1.2"/></svg>
<div class="t" style="left:24.00px;top:1005px;font-size:12px;font-weight:bold;letter-spacing:0.250px;">Start</div>
<div class="ab" style="left:62px;top:999px;width:2px;height:23px;border-left:1px solid #808080;border-right:1px solid #fff"></div>
<div class="ab" style="left:65px;top:999px;width:3px;height:22px;border-style:solid;border-width:1px;border-color:#fff #808080 #808080 #fff"></div>
<div class="ab r1" style="left:71px;top:1000px;width:54px;height:22px;"></div>
<svg class="ab" style="left:75px;top:1003px;" width="16" height="16" viewBox="0 0 16 16"><ellipse cx="8" cy="8" rx="7.5" ry="7" fill="#2030c0"/><ellipse cx="8" cy="8" rx="5.5" ry="5" fill="#8090e0"/><circle cx="6" cy="6" r="1.6" fill="#e02040"/><circle cx="10" cy="6.5" r="1.5" fill="#40a040"/><path d="M3 12Q6 7 9 12Z" fill="#6020a0"/><path d="M7 12Q10 8 13 12Z" fill="#a02060"/></svg>
<div class="t" style="left:93.00px;top:1006px;font-size:11px;letter-spacing:0.4px">An...</div>
<div class="ab r1" style="left:128px;top:1000px;width:54px;height:22px;"></div>
<svg class="ab" style="left:132px;top:1003px;" width="16" height="16" viewBox="0 0 16 16"><path d="M1 3H6L7 4.5H14V13H1Z" fill="#f0e080" stroke="#806000"/><circle cx="7" cy="8" r="3.5" fill="#80d0f0" stroke="#203060" stroke-width="1.2"/><path d="M9.5 10.5L14 15" stroke="#2040a0" stroke-width="2.2"/></svg>
<div class="t" style="left:150.00px;top:1006px;font-size:11px;letter-spacing:0.4px">D:\...</div>
<div class="ab r1" style="left:185px;top:1000px;width:54px;height:22px;"></div>
<svg class="ab" style="left:189px;top:1003px;" width="16" height="16" viewBox="0 0 16 16"><path d="M4.5 0.5H11L14.5 4V15.5H4.5Z" fill="#fff" stroke="#000"/><path d="M11 0.5V4H14.5" fill="none" stroke="#000"/><ellipse cx="6" cy="8.5" rx="4.5" ry="4" fill="#2858d0"/><ellipse cx="6.2" cy="8.2" rx="2.2" ry="1.8" fill="#fff"/><path d="M3.5 8.2H9" stroke="#2858d0" stroke-width="1"/><path d="M0.5 12Q6 2 12 4" stroke="#1030a0" stroke-width="1" fill="none"/></svg>
<div class="t" style="left:207.00px;top:1006px;font-size:11px;letter-spacing:0.4px">Wo...</div>
<div class="ab r1" style="left:242px;top:1000px;width:54px;height:22px;"></div>
<svg class="ab" style="left:246px;top:1003px;" width="16" height="16" viewBox="0 0 16 16"><rect x="0" y="4" width="16" height="4" fill="#fff" stroke="#606060" stroke-width="0.5"/><rect x="0" y="8" width="16" height="6" fill="#208080"/></svg>
<div class="t" style="left:264.00px;top:1006px;font-size:11px;letter-spacing:0.4px">ECL...</div>
<div class="ab r1" style="left:299px;top:1000px;width:54px;height:22px;"></div>
<svg class="ab" style="left:303px;top:1003px;" width="16" height="16" viewBox="0 0 16 16"><path d="M4.5 0.5H11L14.5 4V15.5H4.5Z" fill="#fff" stroke="#000"/><path d="M11 0.5V4H14.5" fill="none" stroke="#000"/><ellipse cx="6" cy="8.5" rx="4.5" ry="4" fill="#2858d0"/><ellipse cx="6.2" cy="8.2" rx="2.2" ry="1.8" fill="#fff"/><path d="M3.5 8.2H9" stroke="#2858d0" stroke-width="1"/><path d="M0.5 12Q6 2 12 4" stroke="#1030a0" stroke-width="1" fill="none"/></svg>
<div class="t" style="left:321.00px;top:1006px;font-size:11px;letter-spacing:0.4px">uni...</div>
<div class="ab r1" style="left:356px;top:1000px;width:54px;height:22px;"></div>
<svg class="ab" style="left:360px;top:1003px;" width="16" height="16" viewBox="0 0 16 16"><path d="M4.5 0.5H11L14.5 4V15.5H4.5Z" fill="#fff" stroke="#000"/><path d="M11 0.5V4H14.5" fill="none" stroke="#000"/><ellipse cx="6" cy="8.5" rx="4.5" ry="4" fill="#2858d0"/><ellipse cx="6.2" cy="8.2" rx="2.2" ry="1.8" fill="#fff"/><path d="M3.5 8.2H9" stroke="#2858d0" stroke-width="1"/><path d="M0.5 12Q6 2 12 4" stroke="#1030a0" stroke-width="1" fill="none"/></svg>
<div class="t" style="left:378.00px;top:1006px;font-size:11px;letter-spacing:0.4px">liga...</div>
<div class="ab r1" style="left:413px;top:1000px;width:54px;height:22px;"></div>
<svg class="ab" style="left:417px;top:1003px;" width="16" height="16" viewBox="0 0 16 16"><rect x="0" y="2" width="16" height="12" fill="#000"/><rect x="0" y="2" width="16" height="2" fill="#000080"/><path d="M2 9H5M6 6L9 11M3 7V11" stroke="#fff" stroke-width="1"/></svg>
<div class="t" style="left:435.00px;top:1006px;font-size:11px;letter-spacing:0.4px">C:\...</div>
<div class="ab r1" style="left:470px;top:1000px;width:54px;height:22px;"></div>
<svg class="ab" style="left:474px;top:1003px;" width="16" height="16" viewBox="0 0 16 16"><path d="M4.5 0.5H11L14.5 4V15.5H4.5Z" fill="#fff" stroke="#000"/><rect x="0.5" y="3.5" width="10" height="9" fill="#fff" stroke="#000080"/><path d="M2 5L3.5 11L5.5 6.5L7.5 11L9 5" stroke="#000080" stroke-width="1.3" fill="none"/></svg>
<div class="t" style="left:492.00px;top:1006px;font-size:11px;letter-spacing:0.4px">fre...</div>
<div class="ab r1" style="left:527px;top:1000px;width:54px;height:22px;"></div>
<svg class="ab" style="left:531px;top:1003px;" width="16" height="16" viewBox="0 0 16 16"><path d="M4.5 0.5H11L14.5 4V15.5H4.5Z" fill="#fff" stroke="#000"/><rect x="0.5" y="3.5" width="10" height="9" fill="#fff" stroke="#000080"/><path d="M2 5L3.5 11L5.5 6.5L7.5 11L9 5" stroke="#000080" stroke-width="1.3" fill="none"/></svg>
<div class="t" style="left:549.00px;top:1006px;font-size:11px;letter-spacing:0.4px">Co...</div>
<div class="ab chk" style="left:584px;top:1000px;width:54px;height:22px;border-style:solid;border-width:1px;border-color:#404040 #fff #fff #404040;box-shadow:inset 1px 1px 0 #808080"></div>
<svg class="ab" style="left:588px;top:1004px;" width="16" height="16" viewBox="0 0 16 16"><rect width="16" height="16" fill="#0c0c38"/><ellipse cx="8" cy="8.5" rx="6.5" ry="2.6" transform="rotate(-38 8 8.5)" fill="#7a7ad0"/><ellipse cx="8" cy="8.5" rx="3.5" ry="1.4" transform="rotate(-38 8 8.5)" fill="#f0f0ff"/><circle cx="3" cy="4" r=".7" fill="#fff"/><circle cx="13" cy="13" r=".7" fill="#fff"/></svg>
<div class="t" style="left:608.00px;top:1007px;font-size:11px;font-weight:bold;">Glo...</div>
<div class="ab r1" style="left:641px;top:1000px;width:54px;height:22px;"></div>
<svg class="ab" style="left:645px;top:1003px;" width="16" height="16" viewBox="0 0 16 16"><path d="M3 5H13L12 15H4Z" fill="#fff" stroke="#000"/><path d="M4 6L6 1M7 6L9 0M10 6L13 2" stroke="#8040a0" stroke-width="1.5"/><path d="M8 6L8 1" stroke="#e0a020" stroke-width="1.5"/><rect x="8" y="5" width="5" height="10" fill="#e8e8e8" stroke="#000"/></svg>
<div class="t" style="left:663.00px;top:1006px;font-size:11px;letter-spacing:0.4px">glo...</div>
<div class="ab" style="left:771px;top:999px;width:2px;height:23px;border-left:1px solid #808080;border-right:1px solid #fff"></div>
<div class="ab" style="left:773px;top:999px;width:3px;height:22px;border-style:solid;border-width:1px;border-color:#fff #808080 #808080 #fff"></div>
<svg class="ab" style="left:784px;top:1003px;" width="16" height="16" viewBox="0 0 16 16"><path d="M13.5 9.5H5.5Q6 12.5 9 12.5Q11 12.5 12.5 11" stroke="#1e70d0" stroke-width="2.2" fill="none"/><path d="M4.5 8Q5 3.5 9 3.5Q13 3.5 13.5 8H5" stroke="#1e70d0" stroke-width="2.2" fill="none"/><path d="M1 14Q0 9 6 5Q12 1 15 2" stroke="#60a0e0" stroke-width="1" fill="none"/></svg>
<svg class="ab" style="left:807px;top:1003px;" width="16" height="16" viewBox="0 0 16 16"><ellipse cx="8" cy="8" rx="7.5" ry="7" fill="#2030c0"/><ellipse cx="8" cy="8" rx="5.5" ry="5" fill="#8090e0"/><circle cx="6" cy="6" r="1.6" fill="#e02040"/><path d="M3 12Q6 7 9 12Z" fill="#6020a0"/><path d="M7 12Q10 8 13 12Z" fill="#a02060"/></svg>
<svg class="ab" style="left:830px;top:1003px;" width="16" height="16" viewBox="0 0 16 16"><rect x="0.5" y="0.5" width="15" height="15" fill="#fff" stroke="#800030" stroke-width="1.5"/><circle cx="10" cy="5" r="2.5" fill="none" stroke="#800030" stroke-width="1.5"/><path d="M8.5 6.5L3 12M4 11L6 13" stroke="#800030" stroke-width="1.5"/></svg>
<svg class="ab" style="left:853px;top:1003px;" width="16" height="16" viewBox="0 0 16 16"><rect x="0.5" y="0.5" width="15" height="15" fill="#fff" stroke="#208040" stroke-width="1.5"/><path d="M4 3L12 13M12 3L4 13" stroke="#208040" stroke-width="2"/></svg>
<svg class="ab" style="left:876px;top:1003px;" width="16" height="16" viewBox="0 0 16 16"><rect x="0.5" y="0.5" width="15" height="15" fill="#fff" stroke="#d06020" stroke-width="1.5"/><circle cx="8" cy="8" r="4" fill="#d06020"/><path d="M8 8V4A4 4 0 0 1 12 8Z" fill="#fff"/></svg>
<svg class="ab" style="left:899px;top:1003px;" width="16" height="16" viewBox="0 0 16 16"><rect x="0.5" y="0.5" width="15" height="15" fill="#fff" stroke="#102080" stroke-width="1.5"/><path d="M2.5 4L4.5 12L8 6L11.5 12L13.5 4" stroke="#102080" stroke-width="2" fill="none"/></svg>
<svg class="ab" style="left:922px;top:1003px;" width="16" height="16" viewBox="0 0 16 16"><rect x="0.5" y="2.5" width="15" height="12" fill="#fff" stroke="#404040"/><rect x="1" y="3" width="14" height="3" fill="#203090"/></svg>
<svg class="ab" style="left:945px;top:1003px;" width="16" height="16" viewBox="0 0 16 16"><rect x="2.5" y="0.5" width="11" height="9" fill="#c0c0c0" stroke="#404040"/><rect x="4" y="2" width="8" height="6" fill="#2030a0"/><rect x="0.5" y="11.5" width="15" height="4" fill="#c0c0c0" stroke="#404040"/></svg>
<svg class="ab" style="left:968px;top:1003px;" width="16" height="16" viewBox="0 0 16 16"><rect x="0.5" y="3.5" width="11" height="12" fill="#e0f0f0" stroke="#2070a0"/><path d="M6 11L14 2L15.5 3.5L7.5 12.5L5.5 13Z" fill="#404040" stroke="#000" stroke-width=".6"/></svg>
<svg class="ab" style="left:991px;top:1003px;" width="16" height="16" viewBox="0 0 16 16"><circle cx="8" cy="8" r="7" fill="#f0a020"/><circle cx="8" cy="8" r="5" fill="#2050c0"/><circle cx="8" cy="8" r="3.5" fill="#fff"/><path d="M6.5 5.5L11 8L6.5 10.5Z" fill="#2050c0"/></svg>
<svg class="ab" style="left:1014px;top:1003px;" width="16" height="16" viewBox="0 0 16 16"><circle cx="8" cy="8" r="7" fill="#40a040"/><path d="M2 12Q6 2 15 3" stroke="#f0e030" stroke-width="2.5" fill="none"/><path d="M1 7Q8 9 14 14" stroke="#3060d0" stroke-width="2" fill="none"/></svg>
<svg class="ab" style="left:1037px;top:1003px;" width="16" height="16" viewBox="0 0 16 16"><rect x="1" y="2" width="14" height="12" rx="2" fill="#d0e8f8" stroke="#2070c0"/><path d="M4 10Q8 3 12 8" stroke="#2070c0" stroke-width="2" fill="none"/><path d="M4 5H12" stroke="#80a0c0"/></svg>
<div class="ab" style="left:1094px;top:1000px;width:184px;height:22px;border-style:solid;border-width:1px;border-color:#808080 #fff #fff #808080"></div>
<svg class="ab" style="left:1098px;top:1003px;" width="16" height="16" viewBox="0 0 16 16"><rect x="0.5" y="0.5" width="15" height="15" fill="#fff" stroke="#000080"/><rect x="1.5" y="1.5" width="13" height="13" fill="#1030c0"/><path d="M4 3L13 8L4 13Z" fill="#fff"/></svg>
<svg class="ab" style="left:1116px;top:1003px;" width="16" height="16" viewBox="0 0 16 16"><path d="M2 6H5L9 2V14L5 10H2Z" fill="#e8e080" stroke="#404000"/><path d="M11 5Q13 8 11 11M12.5 3.5Q15.5 8 12.5 12.5" stroke="#a0a0a0" fill="none"/></svg>
<svg class="ab" style="left:1134px;top:1003px;" width="16" height="16" viewBox="0 0 16 16"><path d="M1 1H15V9Q15 14 8 16Q1 14 1 9Z" fill="#1030a0"/><path d="M3 3H13V9Q13 12.5 8 14Q3 12.5 3 9Z" fill="#fff"/><path d="M5 4L8 12L11 4" stroke="#d01010" stroke-width="2" fill="none"/></svg>
<svg class="ab" style="left:1152px;top:1003px;" width="16" height="16" viewBox="0 0 16 16"><circle cx="8" cy="8" r="7.5" fill="#e02010"/><circle cx="8" cy="8" r="4.5" fill="#f0d020"/><circle cx="8" cy="8" r="2" fill="#806000"/></svg>
<svg class="ab" style="left:1170px;top:1003px;" width="16" height="16" viewBox="0 0 16 16"><rect x="0.5" y="0.5" width="15" height="15" fill="#fff" stroke="#40a0a0"/><path d="M6 15L15 1M6 15L15 8M6 15L10 1" stroke="#20a0a0" stroke-width="1.5"/></svg>
<svg class="ab" style="left:1188px;top:1003px;" width="16" height="16" viewBox="0 0 16 16"><rect width="16" height="16" fill="#0c0c38"/><ellipse cx="8" cy="8.5" rx="6.5" ry="2.6" transform="rotate(-38 8 8.5)" fill="#7a7ad0"/><ellipse cx="8" cy="8.5" rx="3.5" ry="1.4" transform="rotate(-38 8 8.5)" fill="#f0f0ff"/><circle cx="3" cy="4" r=".7" fill="#fff"/><circle cx="13" cy="13" r=".7" fill="#fff"/></svg>
<div class="t" style="left:1223.00px;top:1006px;font-size:11px;letter-spacing:-0.383px;">2:18 PM</div>
</body></html>
